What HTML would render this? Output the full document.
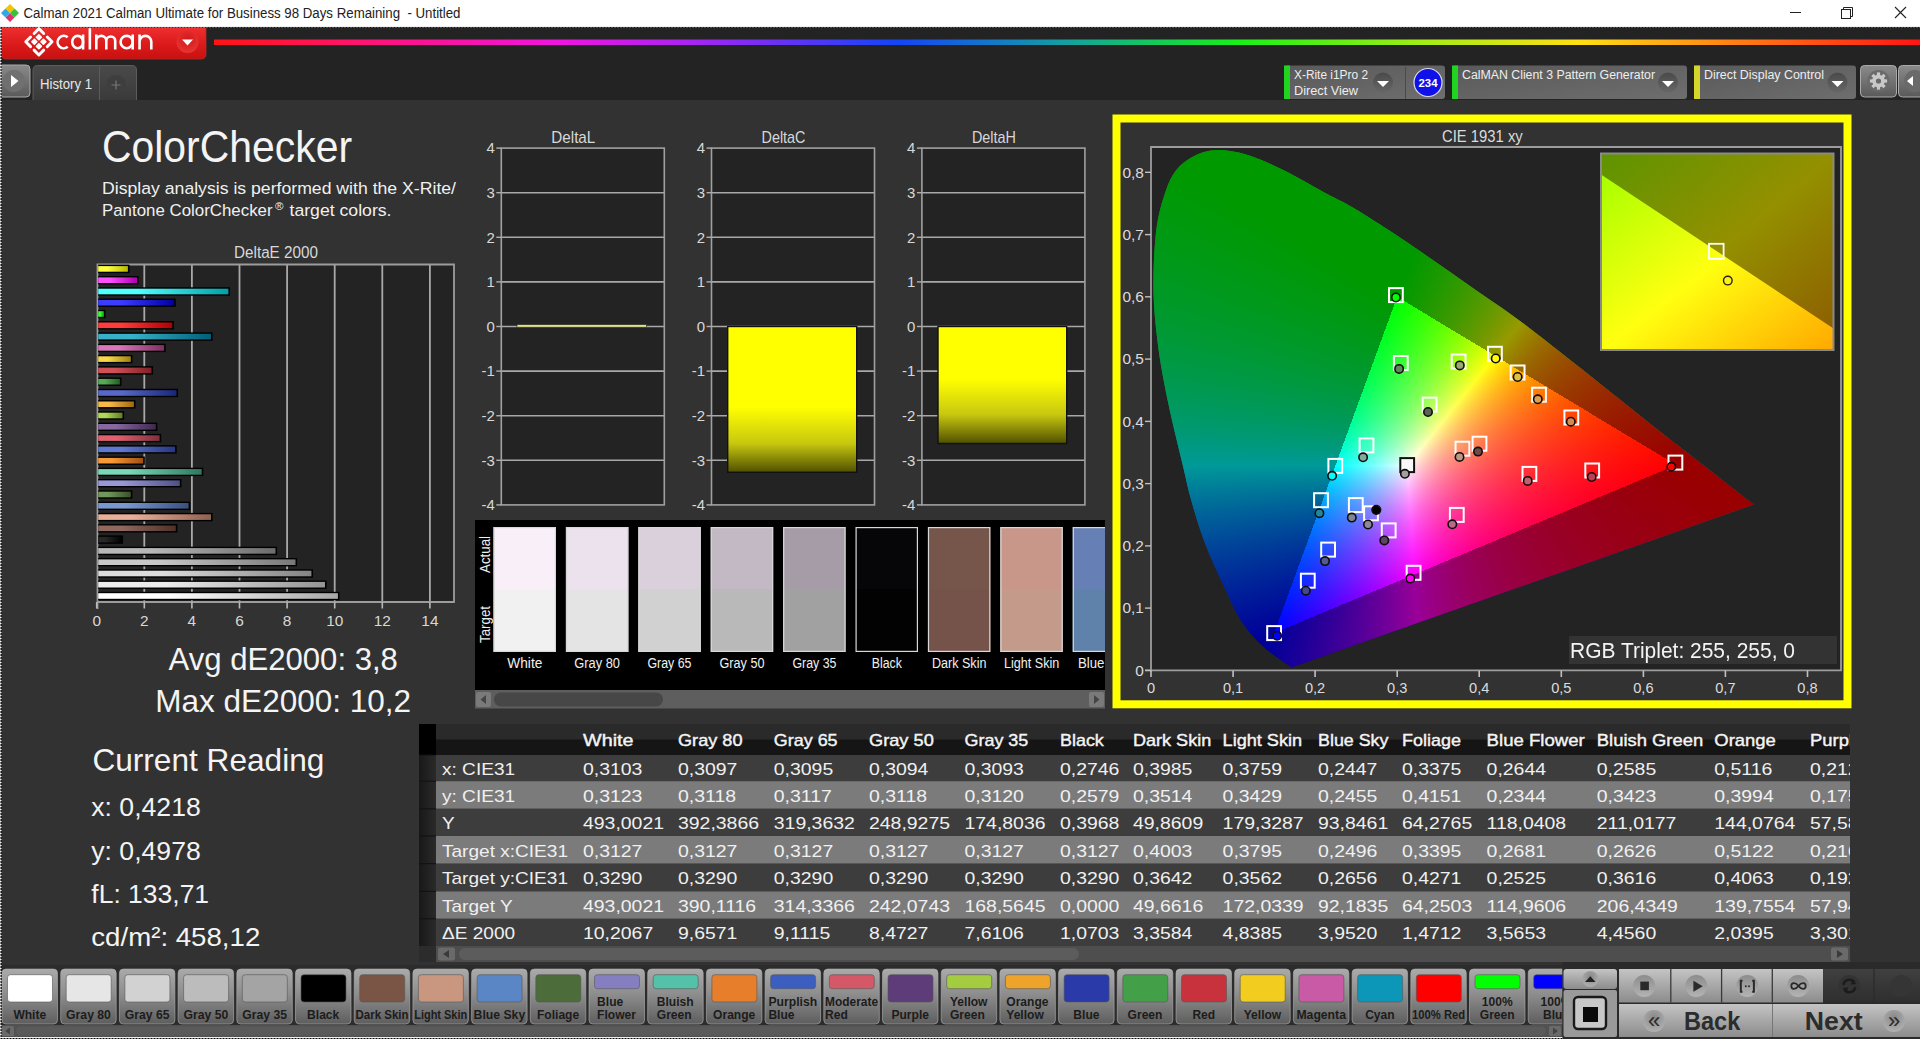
<!DOCTYPE html>
<html><head><meta charset="utf-8"><title>Calman</title>
<style>
html,body{margin:0;padding:0;width:1920px;height:1039px;overflow:hidden;background:#323232;}
svg{position:absolute;left:0;top:0;font-family:"Liberation Sans",sans-serif;}
canvas{position:absolute;left:1151px;top:147px;}
</style></head><body>
<svg width="1920" height="1039" viewBox="0 0 1920 1039">
<defs><pattern id="dots" width="3" height="3" patternUnits="userSpaceOnUse"><rect width="3" height="3" fill="#f0f0f0"/><rect x="0.5" y="0" width="2" height="2" fill="#080808"/></pattern><linearGradient id="rainbow" x1="214" x2="1920" y1="0" y2="0" gradientUnits="userSpaceOnUse"><stop offset="0" stop-color="#ff1414"/><stop offset="0.084" stop-color="#ff1470"/><stop offset="0.2" stop-color="#f014e0"/><stop offset="0.28" stop-color="#a824f0"/><stop offset="0.4" stop-color="#1444f8"/><stop offset="0.5" stop-color="#14a0a0"/><stop offset="0.6" stop-color="#18f018"/><stop offset="0.706" stop-color="#a0ec14"/><stop offset="0.8" stop-color="#ffe014"/><stop offset="0.89" stop-color="#ff8014"/><stop offset="1" stop-color="#ff1414"/></linearGradient><linearGradient id="redbtn" x1="0" x2="0" y1="0" y2="1"><stop offset="0" stop-color="#ee3030"/><stop offset="0.5" stop-color="#dd1c1c"/><stop offset="1" stop-color="#c81010"/></linearGradient><radialGradient id="reddd" cx="0.5" cy="0.4" r="0.6"><stop offset="0" stop-color="#d01818"/><stop offset="1" stop-color="#e83434"/></radialGradient><linearGradient id="gbtn" x1="0" x2="0" y1="0" y2="1"><stop offset="0" stop-color="#8a8a8a"/><stop offset="1" stop-color="#5a5a5a"/></linearGradient><linearGradient id="tabg" x1="0" x2="0" y1="0" y2="1"><stop offset="0" stop-color="#4a4a4a"/><stop offset="1" stop-color="#3a3a3a"/></linearGradient><linearGradient id="boxg" x1="0" x2="1" y1="0" y2="1"><stop offset="0" stop-color="#595959"/><stop offset="1" stop-color="#6e6e6e"/></linearGradient><linearGradient id="ddg" x1="0" x2="0" y1="0" y2="1"><stop offset="0" stop-color="#4a4a4a"/><stop offset="1" stop-color="#666"/></linearGradient><linearGradient id="bg0" x1="0" x2="1" y1="0" y2="0"><stop offset="0" stop-color="#ffff40"/><stop offset="0.3" stop-color="#ffff40"/><stop offset="1" stop-color="#b8b800"/></linearGradient><linearGradient id="bg1" x1="0" x2="1" y1="0" y2="0"><stop offset="0" stop-color="#ff50ff"/><stop offset="0.3" stop-color="#ff50ff"/><stop offset="1" stop-color="#b000b0"/></linearGradient><linearGradient id="bg2" x1="0" x2="1" y1="0" y2="0"><stop offset="0" stop-color="#50ffff"/><stop offset="0.3" stop-color="#50ffff"/><stop offset="1" stop-color="#00a0a8"/></linearGradient><linearGradient id="bg3" x1="0" x2="1" y1="0" y2="0"><stop offset="0" stop-color="#3c3cff"/><stop offset="0.3" stop-color="#3c3cff"/><stop offset="1" stop-color="#0000a0"/></linearGradient><linearGradient id="bg4" x1="0" x2="1" y1="0" y2="0"><stop offset="0" stop-color="#40ff40"/><stop offset="0.3" stop-color="#40ff40"/><stop offset="1" stop-color="#00b000"/></linearGradient><linearGradient id="bg5" x1="0" x2="1" y1="0" y2="0"><stop offset="0" stop-color="#ff3c3c"/><stop offset="0.3" stop-color="#ff3c3c"/><stop offset="1" stop-color="#b00000"/></linearGradient><linearGradient id="bg6" x1="0" x2="1" y1="0" y2="0"><stop offset="0" stop-color="#38b0c8"/><stop offset="0.3" stop-color="#38b0c8"/><stop offset="1" stop-color="#006078"/></linearGradient><linearGradient id="bg7" x1="0" x2="1" y1="0" y2="0"><stop offset="0" stop-color="#d878b8"/><stop offset="0.3" stop-color="#d878b8"/><stop offset="1" stop-color="#803060"/></linearGradient><linearGradient id="bg8" x1="0" x2="1" y1="0" y2="0"><stop offset="0" stop-color="#f8d848"/><stop offset="0.3" stop-color="#f8d848"/><stop offset="1" stop-color="#a08010"/></linearGradient><linearGradient id="bg9" x1="0" x2="1" y1="0" y2="0"><stop offset="0" stop-color="#d05058"/><stop offset="0.3" stop-color="#d05058"/><stop offset="1" stop-color="#802028"/></linearGradient><linearGradient id="bg10" x1="0" x2="1" y1="0" y2="0"><stop offset="0" stop-color="#58a858"/><stop offset="0.3" stop-color="#58a858"/><stop offset="1" stop-color="#206020"/></linearGradient><linearGradient id="bg11" x1="0" x2="1" y1="0" y2="0"><stop offset="0" stop-color="#5868c8"/><stop offset="0.3" stop-color="#5868c8"/><stop offset="1" stop-color="#182878"/></linearGradient><linearGradient id="bg12" x1="0" x2="1" y1="0" y2="0"><stop offset="0" stop-color="#f8b848"/><stop offset="0.3" stop-color="#f8b848"/><stop offset="1" stop-color="#a06810"/></linearGradient><linearGradient id="bg13" x1="0" x2="1" y1="0" y2="0"><stop offset="0" stop-color="#b0d858"/><stop offset="0.3" stop-color="#b0d858"/><stop offset="1" stop-color="#608020"/></linearGradient><linearGradient id="bg14" x1="0" x2="1" y1="0" y2="0"><stop offset="0" stop-color="#8868a0"/><stop offset="0.3" stop-color="#8868a0"/><stop offset="1" stop-color="#402850"/></linearGradient><linearGradient id="bg15" x1="0" x2="1" y1="0" y2="0"><stop offset="0" stop-color="#e06070"/><stop offset="0.3" stop-color="#e06070"/><stop offset="1" stop-color="#803040"/></linearGradient><linearGradient id="bg16" x1="0" x2="1" y1="0" y2="0"><stop offset="0" stop-color="#6078d0"/><stop offset="0.3" stop-color="#6078d0"/><stop offset="1" stop-color="#283880"/></linearGradient><linearGradient id="bg17" x1="0" x2="1" y1="0" y2="0"><stop offset="0" stop-color="#f89838"/><stop offset="0.3" stop-color="#f89838"/><stop offset="1" stop-color="#a05010"/></linearGradient><linearGradient id="bg18" x1="0" x2="1" y1="0" y2="0"><stop offset="0" stop-color="#78d8b8"/><stop offset="0.3" stop-color="#78d8b8"/><stop offset="1" stop-color="#307860"/></linearGradient><linearGradient id="bg19" x1="0" x2="1" y1="0" y2="0"><stop offset="0" stop-color="#9898d8"/><stop offset="0.3" stop-color="#9898d8"/><stop offset="1" stop-color="#505088"/></linearGradient><linearGradient id="bg20" x1="0" x2="1" y1="0" y2="0"><stop offset="0" stop-color="#70985a"/><stop offset="0.3" stop-color="#70985a"/><stop offset="1" stop-color="#3a5028"/></linearGradient><linearGradient id="bg21" x1="0" x2="1" y1="0" y2="0"><stop offset="0" stop-color="#7898d0"/><stop offset="0.3" stop-color="#7898d0"/><stop offset="1" stop-color="#385080"/></linearGradient><linearGradient id="bg22" x1="0" x2="1" y1="0" y2="0"><stop offset="0" stop-color="#e8b098"/><stop offset="0.3" stop-color="#e8b098"/><stop offset="1" stop-color="#906050"/></linearGradient><linearGradient id="bg23" x1="0" x2="1" y1="0" y2="0"><stop offset="0" stop-color="#906860"/><stop offset="0.3" stop-color="#906860"/><stop offset="1" stop-color="#503028"/></linearGradient><linearGradient id="bg24" x1="0" x2="1" y1="0" y2="0"><stop offset="0" stop-color="#282828"/><stop offset="0.3" stop-color="#282828"/><stop offset="1" stop-color="#000000"/></linearGradient><linearGradient id="bg25" x1="0" x2="1" y1="0" y2="0"><stop offset="0" stop-color="#b8b8b8"/><stop offset="0.3" stop-color="#b8b8b8"/><stop offset="1" stop-color="#6c6c6c"/></linearGradient><linearGradient id="bg26" x1="0" x2="1" y1="0" y2="0"><stop offset="0" stop-color="#c8c8c8"/><stop offset="0.3" stop-color="#c8c8c8"/><stop offset="1" stop-color="#787878"/></linearGradient><linearGradient id="bg27" x1="0" x2="1" y1="0" y2="0"><stop offset="0" stop-color="#dcdcdc"/><stop offset="0.3" stop-color="#dcdcdc"/><stop offset="1" stop-color="#848484"/></linearGradient><linearGradient id="bg28" x1="0" x2="1" y1="0" y2="0"><stop offset="0" stop-color="#ececec"/><stop offset="0.3" stop-color="#ececec"/><stop offset="1" stop-color="#949494"/></linearGradient><linearGradient id="bg29" x1="0" x2="1" y1="0" y2="0"><stop offset="0" stop-color="#ffffff"/><stop offset="0.3" stop-color="#ffffff"/><stop offset="1" stop-color="#a8a8a8"/></linearGradient><linearGradient id="ybar" x1="0" x2="0" y1="0" y2="1"><stop offset="0" stop-color="#ffff00"/><stop offset="0.55" stop-color="#ffff00"/><stop offset="0.8" stop-color="#c8c810"/><stop offset="1" stop-color="#505000"/></linearGradient><linearGradient id="ybar2" x1="0" x2="0" y1="0" y2="1"><stop offset="0" stop-color="#ffff00"/><stop offset="0.45" stop-color="#ffff00"/><stop offset="0.75" stop-color="#c8c810"/><stop offset="1" stop-color="#505000"/></linearGradient><clipPath id="pclip"><rect x="475" y="520" width="630" height="170"/></clipPath><clipPath id="tclip"><rect x="419" y="724" width="1431" height="240"/></clipPath><linearGradient id="rh0" x1="0" x2="1"><stop offset="0" stop-color="#181818"/><stop offset="1" stop-color="#2a2a2a"/></linearGradient><linearGradient id="swb" x1="0" x2="0" y1="0" y2="1"><stop offset="0" stop-color="#aaaaaa"/><stop offset="0.45" stop-color="#8e8e8e"/><stop offset="1" stop-color="#5e5e5e"/></linearGradient><clipPath id="swclip"><rect x="0" y="962" width="1562.5" height="77"/></clipPath><linearGradient id="lb" x1="0" x2="0" y1="0" y2="1"><stop offset="0" stop-color="#c4c4c4"/><stop offset="1" stop-color="#8c8c8c"/></linearGradient><linearGradient id="db" x1="0" x2="0" y1="0" y2="1"><stop offset="0" stop-color="#404040"/><stop offset="1" stop-color="#2e2e2e"/></linearGradient><radialGradient id="cbt" cx="0.5" cy="0.35" r="0.65"><stop offset="0" stop-color="#888"/><stop offset="1" stop-color="#b0b0b0"/></radialGradient><linearGradient id="cbt2" x1="0" x2="0" y1="0" y2="1"><stop offset="0" stop-color="#8c8c8c"/><stop offset="1" stop-color="#b4b4b4"/></linearGradient><linearGradient id="inUp" x1="0" y1="0" x2="1" y2="1"><stop offset="0" stop-color="#5e9400"/><stop offset="0.5" stop-color="#949000"/><stop offset="1" stop-color="#8c5a00"/></linearGradient><linearGradient id="inLo" x1="0" y1="0" x2="1" y2="1"><stop offset="0" stop-color="#a8ff00"/><stop offset="0.5" stop-color="#ffff10"/><stop offset="1" stop-color="#ffa800"/></linearGradient></defs>
<rect x="0" y="0" width="1920" height="26" fill="#ffffff" />
<g transform="translate(10,13)"><path d="M0,-9 L4.5,-4.5 L0,0 L-4.5,-4.5Z" fill="#f5c400"/><path d="M4.5,-4.5 L9,0 L4.5,4.5 L0,0Z" fill="#3cbf3c"/><path d="M0,0 L4.5,4.5 L0,9 L-4.5,4.5Z" fill="#e0336e"/><path d="M-4.5,-4.5 L0,0 L-4.5,4.5 L-9,0Z" fill="#2ea8e6"/></g>
<text x="23.5" y="18.2" font-size="14.83" fill="#222222" textLength="437.0" lengthAdjust="spacingAndGlyphs" >Calman 2021 Calman Ultimate for Business 98 Days Remaining  - Untitled</text>
<line x1="1790" y1="12.5" x2="1801" y2="12.5" stroke="#222" stroke-width="1"/>
<rect x="1841.5" y="9.5" width="9" height="9" fill="none" stroke="#222" stroke-width="1"/><path d="M1843.5,9.5 V7.5 H1852.5 V16.5 H1850.5" fill="none" stroke="#222" stroke-width="1"/>
<path d="M1895,7 L1906,18 M1906,7 L1895,18" stroke="#222" stroke-width="1.1"/>
<rect x="0" y="26" width="1920" height="74" fill="#232323" />
<rect x="214" y="39.5" width="1706" height="5.5" fill="url(#rainbow)" />
<path d="M1,27 H206 V54 Q206,59 201,59 H6 Q1,59 1,54 Z" fill="url(#redbtn)" stroke="#a83030" stroke-width="0.8"/>
<rect x="0" y="26" width="1920" height="1.5" fill="url(#dots)" />
<g transform="translate(38.9,41.8) rotate(45)"><path d="M-9.3,-2.500000000000001 V-9.3 H-2.500000000000001 M2.500000000000001,-9.3 H9.3 V-2.500000000000001 M9.3,2.500000000000001 V9.3 H2.500000000000001 M-2.500000000000001,9.3 H-9.3 V2.500000000000001" fill="none" stroke="#fff" stroke-width="2.9" stroke-linejoin="round" stroke-linecap="round"/><rect x="-5.75" y="-5.75" width="5.1" height="5.1" rx="0.8" fill="#fff"/><rect x="-5.75" y="0.65" width="5.1" height="5.1" rx="0.8" fill="#fff"/><rect x="0.65" y="-5.75" width="5.1" height="5.1" rx="0.8" fill="#fff"/><rect x="0.65" y="0.65" width="5.1" height="5.1" rx="0.8" fill="#fff"/></g>
<path d="M67.7,37.34 A6.15,6.15 0 1 0 67.7,46.76 M83.1,34.6 V49.5 M89.85,28.3 V49.5 M96.3,49.5 V34.6 M96.3,40.9 A5,5 0 0 1 106.3,40.9 V49.5 M106.3,40.9 A4.45,4.45 0 0 1 115.2,40.9 V49.5 M132.7,34.6 V49.5 M139.55,49.5 V34.6 M139.55,41.7 A5.875,5.875 0 0 1 151.3,41.7 V49.5" fill="none" stroke="#fff" stroke-width="2.6"/>
<ellipse cx="77.65" cy="42.05" rx="5.45" ry="6.15" fill="none" stroke="#fff" stroke-width="2.6"/>
<ellipse cx="126.65" cy="42.05" rx="6.05" ry="6.15" fill="none" stroke="#fff" stroke-width="2.6"/>
<circle cx="187.5" cy="42" r="11" fill="url(#reddd)"/>
<path d="M182,39.5 L193,39.5 L187.5,45.5Z" fill="#fff"/>
<rect x="-3" y="65" width="33" height="32" rx="4" fill="url(#gbtn)" stroke="#aaa" stroke-width="1"/>
<circle cx="14" cy="81" r="11" fill="#707070"/>
<path d="M11,75 L18.5,81 L11,87Z" fill="#fff"/>
<path d="M33,100 V70 Q33,65.5 37.5,65.5 H132 Q136.5,65.5 136.5,70 V100Z" fill="url(#tabg)"/>
<path d="M33,100 V70 Q33,65.5 37.5,65.5 H132 Q136.5,65.5 136.5,70 V100" fill="none" stroke="#5c5c5c" stroke-width="1"/>
<line x1="99.5" y1="66" x2="99.5" y2="100" stroke="#5c5c5c" stroke-width="1"/>
<text x="40.0" y="88.5" font-size="15.26" fill="#e8e8e8" textLength="52.0" lengthAdjust="spacingAndGlyphs" >History 1</text>
<circle cx="116" cy="85" r="10" fill="#3e3e3e"/>
<path d="M116,80.5 V89.5 M111.5,85 H120.5" stroke="#777" stroke-width="1.2"/>
<rect x="1284" y="65.5" width="161" height="33.5" rx="3" fill="url(#boxg)"/>
<rect x="1284" y="65.5" width="6" height="33.5" fill="#22d422" />
<text x="1294.0" y="78.5" font-size="12.50" fill="#eeeeee" textLength="74.0" lengthAdjust="spacingAndGlyphs" >X-Rite i1Pro 2</text>
<text x="1294.0" y="95.0" font-size="12.50" fill="#eeeeee" textLength="64.0" lengthAdjust="spacingAndGlyphs" >Direct View</text>
<circle cx="1383" cy="82.5" r="10" fill="url(#ddg)"/>
<path d="M1377,81 L1389,81 L1383,87Z" fill="#fff"/>
<line x1="1405.5" y1="67" x2="1405.5" y2="99" stroke="#4a4a4a" stroke-width="1"/>
<circle cx="1428" cy="82.5" r="14" fill="#1010e8" stroke="#dde" stroke-width="1.2"/>
<text x="1428.0" y="86.8" font-size="11.05" fill="#fff" text-anchor="middle" font-weight="bold" textLength="19.0" lengthAdjust="spacingAndGlyphs" >234</text>
<rect x="1452" y="65.5" width="235" height="33.5" rx="3" fill="url(#boxg)"/>
<rect x="1452" y="65.5" width="6" height="33.5" fill="#22d422" />
<text x="1462.0" y="78.5" font-size="12.50" fill="#eeeeee" textLength="193.0" lengthAdjust="spacingAndGlyphs" >CalMAN Client 3 Pattern Generator</text>
<circle cx="1668" cy="82.5" r="10" fill="url(#ddg)"/>
<path d="M1662,81 L1674,81 L1668,87Z" fill="#fff"/>
<rect x="1694" y="65.5" width="162" height="33.5" rx="3" fill="url(#boxg)"/>
<rect x="1694" y="65.5" width="6" height="33.5" fill="#d6d62a" />
<text x="1704.0" y="78.5" font-size="12.50" fill="#eeeeee" textLength="120.0" lengthAdjust="spacingAndGlyphs" >Direct Display Control</text>
<circle cx="1837.5" cy="82.5" r="10" fill="url(#ddg)"/>
<path d="M1831.5,81 L1843.5,81 L1837.5,87Z" fill="#fff"/>
<rect x="1860.5" y="65.5" width="36" height="31.5" rx="4" fill="url(#gbtn)" stroke="#aaa" stroke-width="1"/>
<circle cx="1878.5" cy="81" r="11" fill="#6a6a6a"/>
<g transform="translate(1878.5,81)" fill="#c8c8c8"><circle r="6.3"/><rect x="-1.6" y="-8.6" width="3.2" height="4" transform="rotate(0)"/><rect x="-1.6" y="-8.6" width="3.2" height="4" transform="rotate(45)"/><rect x="-1.6" y="-8.6" width="3.2" height="4" transform="rotate(90)"/><rect x="-1.6" y="-8.6" width="3.2" height="4" transform="rotate(135)"/><rect x="-1.6" y="-8.6" width="3.2" height="4" transform="rotate(180)"/><rect x="-1.6" y="-8.6" width="3.2" height="4" transform="rotate(225)"/><rect x="-1.6" y="-8.6" width="3.2" height="4" transform="rotate(270)"/><rect x="-1.6" y="-8.6" width="3.2" height="4" transform="rotate(315)"/><circle r="2.6" fill="#6a6a6a"/></g>
<rect x="1898.5" y="65.5" width="30" height="31.5" rx="4" fill="url(#gbtn)" stroke="#aaa" stroke-width="1"/>
<circle cx="1915" cy="81" r="11" fill="#6a6a6a"/>
<path d="M1907,81 L1913,76 L1913,86Z" fill="#fff"/>
<rect x="0" y="100" width="1920" height="868" fill="#323232" />
<text x="102.0" y="162.0" font-size="45.06" fill="#f4f4f4" textLength="250.0" lengthAdjust="spacingAndGlyphs" >ColorChecker</text>
<text x="102.0" y="193.5" font-size="16.86" fill="#f0f0f0" textLength="354.0" lengthAdjust="spacingAndGlyphs" >Display analysis is performed with the X-Rite/</text>
<text x="102.0" y="216.0" font-size="16.86" fill="#f0f0f0" >Pantone ColorChecker</text>
<text x="275" y="210" font-size="11.5" fill="#f0f0f0">®</text>
<text x="289.5" y="216.0" font-size="16.86" fill="#f0f0f0" textLength="102.0" lengthAdjust="spacingAndGlyphs" >target colors.</text>
<text x="276.0" y="258.2" font-size="16.42" fill="#d8d8d8" text-anchor="middle" textLength="84.0" lengthAdjust="spacingAndGlyphs" >DeltaE 2000</text>
<rect x="97.5" y="264.5" width="356.5" height="337.5" fill="#232323" />
<line x1="144.3" y1="265" x2="144.3" y2="602" stroke="#a8a8a8" stroke-width="1.8"/>
<line x1="191.9" y1="265" x2="191.9" y2="602" stroke="#a8a8a8" stroke-width="1.8"/>
<line x1="239.5" y1="265" x2="239.5" y2="602" stroke="#a8a8a8" stroke-width="1.8"/>
<line x1="287.1" y1="265" x2="287.1" y2="602" stroke="#a8a8a8" stroke-width="1.8"/>
<line x1="334.7" y1="265" x2="334.7" y2="602" stroke="#a8a8a8" stroke-width="1.8"/>
<line x1="382.3" y1="265" x2="382.3" y2="602" stroke="#a8a8a8" stroke-width="1.8"/>
<line x1="429.9" y1="265" x2="429.9" y2="602" stroke="#a8a8a8" stroke-width="1.8"/>
<path d="M97.5,609 V264.5 H454 V602 H97.5" fill="none" stroke="#9c9c9c" stroke-width="1.8"/>
<line x1="96.7" y1="602" x2="96.7" y2="608.5" stroke="#b8b8b8" stroke-width="1.6"/>
<text x="96.7" y="625.5" font-size="15.41" fill="#d8d8d8" text-anchor="middle" >0</text>
<line x1="144.3" y1="602" x2="144.3" y2="608.5" stroke="#b8b8b8" stroke-width="1.6"/>
<text x="144.3" y="625.5" font-size="15.41" fill="#d8d8d8" text-anchor="middle" >2</text>
<line x1="191.9" y1="602" x2="191.9" y2="608.5" stroke="#b8b8b8" stroke-width="1.6"/>
<text x="191.9" y="625.5" font-size="15.41" fill="#d8d8d8" text-anchor="middle" >4</text>
<line x1="239.5" y1="602" x2="239.5" y2="608.5" stroke="#b8b8b8" stroke-width="1.6"/>
<text x="239.5" y="625.5" font-size="15.41" fill="#d8d8d8" text-anchor="middle" >6</text>
<line x1="287.1" y1="602" x2="287.1" y2="608.5" stroke="#b8b8b8" stroke-width="1.6"/>
<text x="287.1" y="625.5" font-size="15.41" fill="#d8d8d8" text-anchor="middle" >8</text>
<line x1="334.7" y1="602" x2="334.7" y2="608.5" stroke="#b8b8b8" stroke-width="1.6"/>
<text x="334.7" y="625.5" font-size="15.41" fill="#d8d8d8" text-anchor="middle" >10</text>
<line x1="382.3" y1="602" x2="382.3" y2="608.5" stroke="#b8b8b8" stroke-width="1.6"/>
<text x="382.3" y="625.5" font-size="15.41" fill="#d8d8d8" text-anchor="middle" >12</text>
<line x1="429.9" y1="602" x2="429.9" y2="608.5" stroke="#b8b8b8" stroke-width="1.6"/>
<text x="429.9" y="625.5" font-size="15.41" fill="#d8d8d8" text-anchor="middle" >14</text>
<rect x="98.2" y="264.7" width="31.3" height="8.4" fill="#000"/>
<rect x="98.2" y="266.1" width="29.7" height="5.6" fill="url(#bg0)"/>
<rect x="98.2" y="276.0" width="40.4" height="8.4" fill="#000"/>
<rect x="98.2" y="277.4" width="38.8" height="5.6" fill="url(#bg1)"/>
<rect x="98.2" y="287.3" width="131.8" height="8.4" fill="#000"/>
<rect x="98.2" y="288.7" width="130.2" height="5.6" fill="url(#bg2)"/>
<rect x="98.2" y="298.5" width="77.5" height="8.4" fill="#000"/>
<rect x="98.2" y="299.9" width="75.9" height="5.6" fill="url(#bg3)"/>
<rect x="98.2" y="309.8" width="7.3" height="8.4" fill="#000"/>
<rect x="98.2" y="311.2" width="5.7" height="5.6" fill="url(#bg4)"/>
<rect x="98.2" y="321.1" width="75.6" height="8.4" fill="#000"/>
<rect x="98.2" y="322.5" width="74.0" height="5.6" fill="url(#bg5)"/>
<rect x="98.2" y="332.4" width="114.4" height="8.4" fill="#000"/>
<rect x="98.2" y="333.8" width="112.8" height="5.6" fill="url(#bg6)"/>
<rect x="98.2" y="343.7" width="67.5" height="8.4" fill="#000"/>
<rect x="98.2" y="345.1" width="65.9" height="5.6" fill="url(#bg7)"/>
<rect x="98.2" y="354.9" width="34.2" height="8.4" fill="#000"/>
<rect x="98.2" y="356.3" width="32.6" height="5.6" fill="url(#bg8)"/>
<rect x="98.2" y="366.2" width="54.9" height="8.4" fill="#000"/>
<rect x="98.2" y="367.6" width="53.3" height="5.6" fill="url(#bg9)"/>
<rect x="98.2" y="377.5" width="23.3" height="8.4" fill="#000"/>
<rect x="98.2" y="378.9" width="21.7" height="5.6" fill="url(#bg10)"/>
<rect x="98.2" y="388.8" width="79.9" height="8.4" fill="#000"/>
<rect x="98.2" y="390.2" width="78.3" height="5.6" fill="url(#bg11)"/>
<rect x="98.2" y="400.1" width="37.3" height="8.4" fill="#000"/>
<rect x="98.2" y="401.5" width="35.7" height="5.6" fill="url(#bg12)"/>
<rect x="98.2" y="411.3" width="25.9" height="8.4" fill="#000"/>
<rect x="98.2" y="412.7" width="24.3" height="5.6" fill="url(#bg13)"/>
<rect x="98.2" y="422.6" width="59.2" height="8.4" fill="#000"/>
<rect x="98.2" y="424.0" width="57.6" height="5.6" fill="url(#bg14)"/>
<rect x="98.2" y="433.9" width="63.0" height="8.4" fill="#000"/>
<rect x="98.2" y="435.3" width="61.4" height="5.6" fill="url(#bg15)"/>
<rect x="98.2" y="445.2" width="78.5" height="8.4" fill="#000"/>
<rect x="98.2" y="446.6" width="76.9" height="5.6" fill="url(#bg16)"/>
<rect x="98.2" y="456.5" width="46.6" height="8.4" fill="#000"/>
<rect x="98.2" y="457.9" width="45.0" height="5.6" fill="url(#bg17)"/>
<rect x="98.2" y="467.7" width="105.1" height="8.4" fill="#000"/>
<rect x="98.2" y="469.1" width="103.5" height="5.6" fill="url(#bg18)"/>
<rect x="98.2" y="479.0" width="83.2" height="8.4" fill="#000"/>
<rect x="98.2" y="480.4" width="81.6" height="5.6" fill="url(#bg19)"/>
<rect x="98.2" y="490.3" width="34.2" height="8.4" fill="#000"/>
<rect x="98.2" y="491.7" width="32.6" height="5.6" fill="url(#bg20)"/>
<rect x="98.2" y="501.6" width="92.0" height="8.4" fill="#000"/>
<rect x="98.2" y="503.0" width="90.4" height="5.6" fill="url(#bg21)"/>
<rect x="98.2" y="512.9" width="114.4" height="8.4" fill="#000"/>
<rect x="98.2" y="514.3" width="112.8" height="5.6" fill="url(#bg22)"/>
<rect x="98.2" y="524.1" width="79.2" height="8.4" fill="#000"/>
<rect x="98.2" y="525.5" width="77.6" height="5.6" fill="url(#bg23)"/>
<rect x="98.2" y="535.4" width="24.9" height="8.4" fill="#000"/>
<rect x="98.2" y="536.8" width="23.3" height="5.6" fill="url(#bg24)"/>
<rect x="98.2" y="546.7" width="178.9" height="8.4" fill="#000"/>
<rect x="98.2" y="548.1" width="177.3" height="5.6" fill="url(#bg25)"/>
<rect x="98.2" y="558.0" width="198.9" height="8.4" fill="#000"/>
<rect x="98.2" y="559.4" width="197.3" height="5.6" fill="url(#bg26)"/>
<rect x="98.2" y="569.3" width="214.8" height="8.4" fill="#000"/>
<rect x="98.2" y="570.7" width="213.2" height="5.6" fill="url(#bg27)"/>
<rect x="98.2" y="580.5" width="228.4" height="8.4" fill="#000"/>
<rect x="98.2" y="581.9" width="226.8" height="5.6" fill="url(#bg28)"/>
<rect x="98.2" y="591.8" width="241.3" height="8.4" fill="#000"/>
<rect x="98.2" y="593.2" width="239.7" height="5.6" fill="url(#bg29)"/>
<text x="168.5" y="669.8" font-size="31.98" fill="#f4f4f4" textLength="229.4" lengthAdjust="spacingAndGlyphs" >Avg dE2000: 3,8</text>
<text x="155.3" y="712.3" font-size="31.98" fill="#f4f4f4" textLength="255.8" lengthAdjust="spacingAndGlyphs" >Max dE2000: 10,2</text>
<text x="92.4" y="770.8" font-size="31.98" fill="#f4f4f4" textLength="232.0" lengthAdjust="spacingAndGlyphs" >Current Reading</text>
<text x="91.3" y="815.5" font-size="26.60" fill="#f4f4f4" >x: 0,4218</text>
<text x="91.3" y="859.7" font-size="26.60" fill="#f4f4f4" >y: 0,4978</text>
<text x="91.3" y="902.7" font-size="26.60" fill="#f4f4f4" textLength="117.8" lengthAdjust="spacingAndGlyphs" >fL: 133,71</text>
<text x="91.3" y="946.4" font-size="26.60" fill="#f4f4f4" textLength="169.0" lengthAdjust="spacingAndGlyphs" >cd/m²: 458,12</text>
<rect x="501.3" y="148.1" width="163" height="356.8" fill="#232323" />
<line x1="501.3" y1="460.3" x2="664.3" y2="460.3" stroke="#a8a8a8" stroke-width="1.6"/>
<line x1="501.3" y1="415.7" x2="664.3" y2="415.7" stroke="#a8a8a8" stroke-width="1.6"/>
<line x1="501.3" y1="371.1" x2="664.3" y2="371.1" stroke="#a8a8a8" stroke-width="1.6"/>
<line x1="501.3" y1="326.5" x2="664.3" y2="326.5" stroke="#a8a8a8" stroke-width="1.6"/>
<line x1="501.3" y1="281.9" x2="664.3" y2="281.9" stroke="#a8a8a8" stroke-width="1.6"/>
<line x1="501.3" y1="237.3" x2="664.3" y2="237.3" stroke="#a8a8a8" stroke-width="1.6"/>
<line x1="501.3" y1="192.7" x2="664.3" y2="192.7" stroke="#a8a8a8" stroke-width="1.6"/>
<rect x="501.3" y="148.1" width="163" height="356.8" fill="none" stroke="#a0a0a0" stroke-width="1.6"/>
<line x1="496.3" y1="504.9" x2="501.3" y2="504.9" stroke="#b0b0b0" stroke-width="1.4"/>
<text x="494.8" y="510.1" font-size="14.97" fill="#d8d8d8" text-anchor="end" >-4</text>
<line x1="496.3" y1="460.3" x2="501.3" y2="460.3" stroke="#b0b0b0" stroke-width="1.4"/>
<text x="494.8" y="465.5" font-size="14.97" fill="#d8d8d8" text-anchor="end" >-3</text>
<line x1="496.3" y1="415.7" x2="501.3" y2="415.7" stroke="#b0b0b0" stroke-width="1.4"/>
<text x="494.8" y="420.9" font-size="14.97" fill="#d8d8d8" text-anchor="end" >-2</text>
<line x1="496.3" y1="371.1" x2="501.3" y2="371.1" stroke="#b0b0b0" stroke-width="1.4"/>
<text x="494.8" y="376.3" font-size="14.97" fill="#d8d8d8" text-anchor="end" >-1</text>
<line x1="496.3" y1="326.5" x2="501.3" y2="326.5" stroke="#b0b0b0" stroke-width="1.4"/>
<text x="494.8" y="331.7" font-size="14.97" fill="#d8d8d8" text-anchor="end" >0</text>
<line x1="496.3" y1="281.9" x2="501.3" y2="281.9" stroke="#b0b0b0" stroke-width="1.4"/>
<text x="494.8" y="287.1" font-size="14.97" fill="#d8d8d8" text-anchor="end" >1</text>
<line x1="496.3" y1="237.3" x2="501.3" y2="237.3" stroke="#b0b0b0" stroke-width="1.4"/>
<text x="494.8" y="242.5" font-size="14.97" fill="#d8d8d8" text-anchor="end" >2</text>
<line x1="496.3" y1="192.7" x2="501.3" y2="192.7" stroke="#b0b0b0" stroke-width="1.4"/>
<text x="494.8" y="197.9" font-size="14.97" fill="#d8d8d8" text-anchor="end" >3</text>
<line x1="496.3" y1="148.1" x2="501.3" y2="148.1" stroke="#b0b0b0" stroke-width="1.4"/>
<text x="494.8" y="153.3" font-size="14.97" fill="#d8d8d8" text-anchor="end" >4</text>
<text x="573.3" y="142.9" font-size="15.99" fill="#d8d8d8" text-anchor="middle" textLength="44.0" lengthAdjust="spacingAndGlyphs" >DeltaL</text>
<rect x="517" y="324.6" width="129.5" height="2.6" fill="#e0e090" stroke="#222" stroke-width="0.6"/>
<rect x="711.5" y="148.1" width="163" height="356.8" fill="#232323" />
<line x1="711.5" y1="460.3" x2="874.5" y2="460.3" stroke="#a8a8a8" stroke-width="1.6"/>
<line x1="711.5" y1="415.7" x2="874.5" y2="415.7" stroke="#a8a8a8" stroke-width="1.6"/>
<line x1="711.5" y1="371.1" x2="874.5" y2="371.1" stroke="#a8a8a8" stroke-width="1.6"/>
<line x1="711.5" y1="326.5" x2="874.5" y2="326.5" stroke="#a8a8a8" stroke-width="1.6"/>
<line x1="711.5" y1="281.9" x2="874.5" y2="281.9" stroke="#a8a8a8" stroke-width="1.6"/>
<line x1="711.5" y1="237.3" x2="874.5" y2="237.3" stroke="#a8a8a8" stroke-width="1.6"/>
<line x1="711.5" y1="192.7" x2="874.5" y2="192.7" stroke="#a8a8a8" stroke-width="1.6"/>
<rect x="711.5" y="148.1" width="163" height="356.8" fill="none" stroke="#a0a0a0" stroke-width="1.6"/>
<line x1="706.5" y1="504.9" x2="711.5" y2="504.9" stroke="#b0b0b0" stroke-width="1.4"/>
<text x="705.0" y="510.1" font-size="14.97" fill="#d8d8d8" text-anchor="end" >-4</text>
<line x1="706.5" y1="460.3" x2="711.5" y2="460.3" stroke="#b0b0b0" stroke-width="1.4"/>
<text x="705.0" y="465.5" font-size="14.97" fill="#d8d8d8" text-anchor="end" >-3</text>
<line x1="706.5" y1="415.7" x2="711.5" y2="415.7" stroke="#b0b0b0" stroke-width="1.4"/>
<text x="705.0" y="420.9" font-size="14.97" fill="#d8d8d8" text-anchor="end" >-2</text>
<line x1="706.5" y1="371.1" x2="711.5" y2="371.1" stroke="#b0b0b0" stroke-width="1.4"/>
<text x="705.0" y="376.3" font-size="14.97" fill="#d8d8d8" text-anchor="end" >-1</text>
<line x1="706.5" y1="326.5" x2="711.5" y2="326.5" stroke="#b0b0b0" stroke-width="1.4"/>
<text x="705.0" y="331.7" font-size="14.97" fill="#d8d8d8" text-anchor="end" >0</text>
<line x1="706.5" y1="281.9" x2="711.5" y2="281.9" stroke="#b0b0b0" stroke-width="1.4"/>
<text x="705.0" y="287.1" font-size="14.97" fill="#d8d8d8" text-anchor="end" >1</text>
<line x1="706.5" y1="237.3" x2="711.5" y2="237.3" stroke="#b0b0b0" stroke-width="1.4"/>
<text x="705.0" y="242.5" font-size="14.97" fill="#d8d8d8" text-anchor="end" >2</text>
<line x1="706.5" y1="192.7" x2="711.5" y2="192.7" stroke="#b0b0b0" stroke-width="1.4"/>
<text x="705.0" y="197.9" font-size="14.97" fill="#d8d8d8" text-anchor="end" >3</text>
<line x1="706.5" y1="148.1" x2="711.5" y2="148.1" stroke="#b0b0b0" stroke-width="1.4"/>
<text x="705.0" y="153.3" font-size="14.97" fill="#d8d8d8" text-anchor="end" >4</text>
<text x="783.5" y="142.9" font-size="15.99" fill="#d8d8d8" text-anchor="middle" textLength="44.0" lengthAdjust="spacingAndGlyphs" >DeltaC</text>
<rect x="727.7" y="326.5" width="129" height="145.8" fill="url(#ybar)" stroke="#111" stroke-width="1.4"/>
<rect x="921.9" y="148.1" width="163" height="356.8" fill="#232323" />
<line x1="921.9" y1="460.3" x2="1084.9" y2="460.3" stroke="#a8a8a8" stroke-width="1.6"/>
<line x1="921.9" y1="415.7" x2="1084.9" y2="415.7" stroke="#a8a8a8" stroke-width="1.6"/>
<line x1="921.9" y1="371.1" x2="1084.9" y2="371.1" stroke="#a8a8a8" stroke-width="1.6"/>
<line x1="921.9" y1="326.5" x2="1084.9" y2="326.5" stroke="#a8a8a8" stroke-width="1.6"/>
<line x1="921.9" y1="281.9" x2="1084.9" y2="281.9" stroke="#a8a8a8" stroke-width="1.6"/>
<line x1="921.9" y1="237.3" x2="1084.9" y2="237.3" stroke="#a8a8a8" stroke-width="1.6"/>
<line x1="921.9" y1="192.7" x2="1084.9" y2="192.7" stroke="#a8a8a8" stroke-width="1.6"/>
<rect x="921.9" y="148.1" width="163" height="356.8" fill="none" stroke="#a0a0a0" stroke-width="1.6"/>
<line x1="916.9" y1="504.9" x2="921.9" y2="504.9" stroke="#b0b0b0" stroke-width="1.4"/>
<text x="915.4" y="510.1" font-size="14.97" fill="#d8d8d8" text-anchor="end" >-4</text>
<line x1="916.9" y1="460.3" x2="921.9" y2="460.3" stroke="#b0b0b0" stroke-width="1.4"/>
<text x="915.4" y="465.5" font-size="14.97" fill="#d8d8d8" text-anchor="end" >-3</text>
<line x1="916.9" y1="415.7" x2="921.9" y2="415.7" stroke="#b0b0b0" stroke-width="1.4"/>
<text x="915.4" y="420.9" font-size="14.97" fill="#d8d8d8" text-anchor="end" >-2</text>
<line x1="916.9" y1="371.1" x2="921.9" y2="371.1" stroke="#b0b0b0" stroke-width="1.4"/>
<text x="915.4" y="376.3" font-size="14.97" fill="#d8d8d8" text-anchor="end" >-1</text>
<line x1="916.9" y1="326.5" x2="921.9" y2="326.5" stroke="#b0b0b0" stroke-width="1.4"/>
<text x="915.4" y="331.7" font-size="14.97" fill="#d8d8d8" text-anchor="end" >0</text>
<line x1="916.9" y1="281.9" x2="921.9" y2="281.9" stroke="#b0b0b0" stroke-width="1.4"/>
<text x="915.4" y="287.1" font-size="14.97" fill="#d8d8d8" text-anchor="end" >1</text>
<line x1="916.9" y1="237.3" x2="921.9" y2="237.3" stroke="#b0b0b0" stroke-width="1.4"/>
<text x="915.4" y="242.5" font-size="14.97" fill="#d8d8d8" text-anchor="end" >2</text>
<line x1="916.9" y1="192.7" x2="921.9" y2="192.7" stroke="#b0b0b0" stroke-width="1.4"/>
<text x="915.4" y="197.9" font-size="14.97" fill="#d8d8d8" text-anchor="end" >3</text>
<line x1="916.9" y1="148.1" x2="921.9" y2="148.1" stroke="#b0b0b0" stroke-width="1.4"/>
<text x="915.4" y="153.3" font-size="14.97" fill="#d8d8d8" text-anchor="end" >4</text>
<text x="993.9" y="142.9" font-size="15.99" fill="#d8d8d8" text-anchor="middle" textLength="44.0" lengthAdjust="spacingAndGlyphs" >DeltaH</text>
<rect x="938" y="326.5" width="128.7" height="117" fill="url(#ybar2)" stroke="#111" stroke-width="1.4"/>
<rect x="475" y="520" width="630" height="170" fill="#000000" />
<g clip-path="url(#pclip)">
<rect x="493.5" y="527" width="62.5" height="62" fill="#f8eff9"/>
<rect x="493.5" y="589" width="62.5" height="63" fill="#f1f1f1"/>
<rect x="494.1" y="527.6" width="61.3" height="123.8" fill="none" stroke="#d8d8d8" stroke-width="1.2"/>
<text x="524.8" y="668.3" font-size="14.83" fill="#f0f0f0" text-anchor="middle" textLength="35.0" lengthAdjust="spacingAndGlyphs" >White</text>
<rect x="565.9" y="527" width="62.5" height="62" fill="#ebe2ed"/>
<rect x="565.9" y="589" width="62.5" height="63" fill="#e4e4e4"/>
<rect x="566.5" y="527.6" width="61.3" height="123.8" fill="none" stroke="#d8d8d8" stroke-width="1.2"/>
<text x="597.1" y="668.3" font-size="14.83" fill="#f0f0f0" text-anchor="middle" textLength="45.7" lengthAdjust="spacingAndGlyphs" >Gray 80</text>
<rect x="638.3" y="527" width="62.5" height="62" fill="#d9d0dc"/>
<rect x="638.3" y="589" width="62.5" height="63" fill="#d1d1d1"/>
<rect x="638.9" y="527.6" width="61.3" height="123.8" fill="none" stroke="#d8d8d8" stroke-width="1.2"/>
<text x="669.5" y="668.3" font-size="14.83" fill="#f0f0f0" text-anchor="middle" textLength="44.0" lengthAdjust="spacingAndGlyphs" >Gray 65</text>
<rect x="710.7" y="527" width="62.5" height="62" fill="#c2b9c4"/>
<rect x="710.7" y="589" width="62.5" height="63" fill="#b9b9b9"/>
<rect x="711.3" y="527.6" width="61.3" height="123.8" fill="none" stroke="#d8d8d8" stroke-width="1.2"/>
<text x="742.0" y="668.3" font-size="14.83" fill="#f0f0f0" text-anchor="middle" textLength="45.0" lengthAdjust="spacingAndGlyphs" >Gray 50</text>
<rect x="783.1" y="527" width="62.5" height="62" fill="#a69ca8"/>
<rect x="783.1" y="589" width="62.5" height="63" fill="#a1a1a1"/>
<rect x="783.7" y="527.6" width="61.3" height="123.8" fill="none" stroke="#d8d8d8" stroke-width="1.2"/>
<text x="814.4" y="668.3" font-size="14.83" fill="#f0f0f0" text-anchor="middle" textLength="44.0" lengthAdjust="spacingAndGlyphs" >Gray 35</text>
<rect x="855.5" y="527" width="62.5" height="62" fill="#060608"/>
<rect x="855.5" y="589" width="62.5" height="63" fill="#020202"/>
<rect x="856.1" y="527.6" width="61.3" height="123.8" fill="none" stroke="#d8d8d8" stroke-width="1.2"/>
<text x="886.8" y="668.3" font-size="14.83" fill="#f0f0f0" text-anchor="middle" textLength="30.0" lengthAdjust="spacingAndGlyphs" >Black</text>
<rect x="927.9" y="527" width="62.5" height="62" fill="#76554b"/>
<rect x="927.9" y="589" width="62.5" height="63" fill="#76534a"/>
<rect x="928.5" y="527.6" width="61.3" height="123.8" fill="none" stroke="#d8d8d8" stroke-width="1.2"/>
<text x="959.2" y="668.3" font-size="14.83" fill="#f0f0f0" text-anchor="middle" textLength="54.4" lengthAdjust="spacingAndGlyphs" >Dark Skin</text>
<rect x="1000.3" y="527" width="62.5" height="62" fill="#c8978a"/>
<rect x="1000.3" y="589" width="62.5" height="63" fill="#c49a8b"/>
<rect x="1000.9" y="527.6" width="61.3" height="123.8" fill="none" stroke="#d8d8d8" stroke-width="1.2"/>
<text x="1031.6" y="668.3" font-size="14.83" fill="#f0f0f0" text-anchor="middle" textLength="55.3" lengthAdjust="spacingAndGlyphs" >Light Skin</text>
<rect x="1072.7" y="527" width="62.5" height="62" fill="#6680b6"/>
<rect x="1072.7" y="589" width="62.5" height="63" fill="#5f82ab"/>
<rect x="1073.3" y="527.6" width="61.3" height="123.8" fill="none" stroke="#d8d8d8" stroke-width="1.2"/>
<text x="1104.0" y="668.3" font-size="14.83" fill="#f0f0f0" text-anchor="middle" textLength="52.0" lengthAdjust="spacingAndGlyphs" >Blue Sky</text>
</g>
<text transform="translate(489.5,554.5) rotate(-90)" text-anchor="middle" font-size="14.5" fill="#f0f0f0" textLength="37" lengthAdjust="spacingAndGlyphs">Actual</text>
<text transform="translate(489.5,624.5) rotate(-90)" text-anchor="middle" font-size="14.5" fill="#f0f0f0" textLength="37" lengthAdjust="spacingAndGlyphs">Target</text>
<rect x="475" y="690" width="630" height="18.5" fill="#5e5e5e" />
<rect x="476" y="692" width="15" height="15" rx="2" fill="#7a7a7a"/>
<path d="M480.5,699.5 L486,695 L486,704Z" fill="#444"/>
<rect x="494" y="692.5" width="169" height="14" rx="7" fill="#474747"/>
<rect x="1089" y="692" width="15" height="15" rx="2" fill="#7a7a7a"/>
<path d="M1099.5,699.5 L1094,695 L1094,704Z" fill="#444"/>
<g clip-path="url(#tclip)">
<rect x="419" y="724" width="1431" height="238" fill="#2c2c2c" />
<rect x="436" y="724" width="1414" height="15.5" fill="#2a2a2a" />
<rect x="436" y="739.5" width="1414" height="15.5" fill="#151515" />
<rect x="419" y="724" width="17" height="31" fill="#000000" />
<rect x="436" y="755" width="1414" height="26.200000000000045" fill="#3d3d3d" />
<rect x="419" y="755" width="17" height="26.200000000000045" fill="url(#rh0)" />
<line x1="419" y1="755" x2="436" y2="755" stroke="#111" stroke-width="1"/>
<rect x="436" y="781.2" width="1414" height="27.59999999999991" fill="#7b7b7b" />
<rect x="419" y="781.2" width="17" height="27.59999999999991" fill="url(#rh0)" />
<line x1="419" y1="781.2" x2="436" y2="781.2" stroke="#111" stroke-width="1"/>
<rect x="436" y="808.8" width="1414" height="27.200000000000045" fill="#3d3d3d" />
<rect x="419" y="808.8" width="17" height="27.200000000000045" fill="url(#rh0)" />
<line x1="419" y1="808.8" x2="436" y2="808.8" stroke="#111" stroke-width="1"/>
<rect x="436" y="836" width="1414" height="27.700000000000045" fill="#7b7b7b" />
<rect x="419" y="836" width="17" height="27.700000000000045" fill="url(#rh0)" />
<line x1="419" y1="836" x2="436" y2="836" stroke="#111" stroke-width="1"/>
<rect x="436" y="863.7" width="1414" height="27.699999999999932" fill="#3d3d3d" />
<rect x="419" y="863.7" width="17" height="27.699999999999932" fill="url(#rh0)" />
<line x1="419" y1="863.7" x2="436" y2="863.7" stroke="#111" stroke-width="1"/>
<rect x="436" y="891.4" width="1414" height="27.399999999999977" fill="#7b7b7b" />
<rect x="419" y="891.4" width="17" height="27.399999999999977" fill="url(#rh0)" />
<line x1="419" y1="891.4" x2="436" y2="891.4" stroke="#111" stroke-width="1"/>
<rect x="436" y="918.8" width="1414" height="27.200000000000045" fill="#3d3d3d" />
<rect x="419" y="918.8" width="17" height="27.200000000000045" fill="url(#rh0)" />
<line x1="419" y1="918.8" x2="436" y2="918.8" stroke="#111" stroke-width="1"/>
<text x="583.0" y="745.6" font-size="16.57" fill="#f4f4f4" textLength="50.5" lengthAdjust="spacingAndGlyphs" stroke="#f4f4f4" stroke-width="0.4">White</text>
<text x="678.0" y="745.6" font-size="16.57" fill="#f4f4f4" textLength="64.5" lengthAdjust="spacingAndGlyphs" stroke="#f4f4f4" stroke-width="0.4">Gray 80</text>
<text x="773.8" y="745.6" font-size="16.57" fill="#f4f4f4" textLength="63.8" lengthAdjust="spacingAndGlyphs" stroke="#f4f4f4" stroke-width="0.4">Gray 65</text>
<text x="869.0" y="745.6" font-size="16.57" fill="#f4f4f4" textLength="64.8" lengthAdjust="spacingAndGlyphs" stroke="#f4f4f4" stroke-width="0.4">Gray 50</text>
<text x="964.5" y="745.6" font-size="16.57" fill="#f4f4f4" textLength="63.8" lengthAdjust="spacingAndGlyphs" stroke="#f4f4f4" stroke-width="0.4">Gray 35</text>
<text x="1060.0" y="745.6" font-size="16.57" fill="#f4f4f4" textLength="43.8" lengthAdjust="spacingAndGlyphs" stroke="#f4f4f4" stroke-width="0.4">Black</text>
<text x="1133.0" y="745.6" font-size="16.57" fill="#f4f4f4" textLength="78.2" lengthAdjust="spacingAndGlyphs" stroke="#f4f4f4" stroke-width="0.4">Dark Skin</text>
<text x="1222.6" y="745.6" font-size="16.57" fill="#f4f4f4" textLength="79.5" lengthAdjust="spacingAndGlyphs" stroke="#f4f4f4" stroke-width="0.4">Light Skin</text>
<text x="1318.0" y="745.6" font-size="16.57" fill="#f4f4f4" textLength="70.5" lengthAdjust="spacingAndGlyphs" stroke="#f4f4f4" stroke-width="0.4">Blue Sky</text>
<text x="1402.0" y="745.6" font-size="16.57" fill="#f4f4f4" textLength="59.0" lengthAdjust="spacingAndGlyphs" stroke="#f4f4f4" stroke-width="0.4">Foliage</text>
<text x="1486.6" y="745.6" font-size="16.57" fill="#f4f4f4" textLength="98.2" lengthAdjust="spacingAndGlyphs" stroke="#f4f4f4" stroke-width="0.4">Blue Flower</text>
<text x="1596.8" y="745.6" font-size="16.57" fill="#f4f4f4" textLength="106.4" lengthAdjust="spacingAndGlyphs" stroke="#f4f4f4" stroke-width="0.4">Bluish Green</text>
<text x="1714.3" y="745.6" font-size="16.57" fill="#f4f4f4" textLength="61.5" lengthAdjust="spacingAndGlyphs" stroke="#f4f4f4" stroke-width="0.4">Orange</text>
<text x="1810.0" y="745.6" font-size="16.57" fill="#f4f4f4" textLength="108.5" lengthAdjust="spacingAndGlyphs" stroke="#f4f4f4" stroke-width="0.4">Purplish Blue</text>
<text x="442.0" y="774.7" font-size="17.01" fill="#f0f0f0" textLength="73.1" lengthAdjust="spacingAndGlyphs" >x: CIE31</text>
<text x="583.0" y="774.7" font-size="17.01" fill="#f0f0f0" textLength="59.4" lengthAdjust="spacingAndGlyphs" >0,3103</text>
<text x="678.0" y="774.7" font-size="17.01" fill="#f0f0f0" textLength="59.4" lengthAdjust="spacingAndGlyphs" >0,3097</text>
<text x="773.8" y="774.7" font-size="17.01" fill="#f0f0f0" textLength="59.4" lengthAdjust="spacingAndGlyphs" >0,3095</text>
<text x="869.0" y="774.7" font-size="17.01" fill="#f0f0f0" textLength="59.4" lengthAdjust="spacingAndGlyphs" >0,3094</text>
<text x="964.5" y="774.7" font-size="17.01" fill="#f0f0f0" textLength="59.4" lengthAdjust="spacingAndGlyphs" >0,3093</text>
<text x="1060.0" y="774.7" font-size="17.01" fill="#f0f0f0" textLength="59.4" lengthAdjust="spacingAndGlyphs" >0,2746</text>
<text x="1133.0" y="774.7" font-size="17.01" fill="#f0f0f0" textLength="59.4" lengthAdjust="spacingAndGlyphs" >0,3985</text>
<text x="1222.6" y="774.7" font-size="17.01" fill="#f0f0f0" textLength="59.4" lengthAdjust="spacingAndGlyphs" >0,3759</text>
<text x="1318.0" y="774.7" font-size="17.01" fill="#f0f0f0" textLength="59.4" lengthAdjust="spacingAndGlyphs" >0,2447</text>
<text x="1402.0" y="774.7" font-size="17.01" fill="#f0f0f0" textLength="59.4" lengthAdjust="spacingAndGlyphs" >0,3375</text>
<text x="1486.6" y="774.7" font-size="17.01" fill="#f0f0f0" textLength="59.4" lengthAdjust="spacingAndGlyphs" >0,2644</text>
<text x="1596.8" y="774.7" font-size="17.01" fill="#f0f0f0" textLength="59.4" lengthAdjust="spacingAndGlyphs" >0,2585</text>
<text x="1714.3" y="774.7" font-size="17.01" fill="#f0f0f0" textLength="58.0" lengthAdjust="spacingAndGlyphs" >0,5116</text>
<text x="1810.0" y="774.7" font-size="17.01" fill="#f0f0f0" textLength="59.4" lengthAdjust="spacingAndGlyphs" >0,2121</text>
<text x="442.0" y="801.6" font-size="17.01" fill="#f0f0f0" textLength="73.1" lengthAdjust="spacingAndGlyphs" >y: CIE31</text>
<text x="583.0" y="801.6" font-size="17.01" fill="#f0f0f0" textLength="59.4" lengthAdjust="spacingAndGlyphs" >0,3123</text>
<text x="678.0" y="801.6" font-size="17.01" fill="#f0f0f0" textLength="58.0" lengthAdjust="spacingAndGlyphs" >0,3118</text>
<text x="773.8" y="801.6" font-size="17.01" fill="#f0f0f0" textLength="58.0" lengthAdjust="spacingAndGlyphs" >0,3117</text>
<text x="869.0" y="801.6" font-size="17.01" fill="#f0f0f0" textLength="58.0" lengthAdjust="spacingAndGlyphs" >0,3118</text>
<text x="964.5" y="801.6" font-size="17.01" fill="#f0f0f0" textLength="59.4" lengthAdjust="spacingAndGlyphs" >0,3120</text>
<text x="1060.0" y="801.6" font-size="17.01" fill="#f0f0f0" textLength="59.4" lengthAdjust="spacingAndGlyphs" >0,2579</text>
<text x="1133.0" y="801.6" font-size="17.01" fill="#f0f0f0" textLength="59.4" lengthAdjust="spacingAndGlyphs" >0,3514</text>
<text x="1222.6" y="801.6" font-size="17.01" fill="#f0f0f0" textLength="59.4" lengthAdjust="spacingAndGlyphs" >0,3429</text>
<text x="1318.0" y="801.6" font-size="17.01" fill="#f0f0f0" textLength="59.4" lengthAdjust="spacingAndGlyphs" >0,2455</text>
<text x="1402.0" y="801.6" font-size="17.01" fill="#f0f0f0" textLength="59.4" lengthAdjust="spacingAndGlyphs" >0,4151</text>
<text x="1486.6" y="801.6" font-size="17.01" fill="#f0f0f0" textLength="59.4" lengthAdjust="spacingAndGlyphs" >0,2344</text>
<text x="1596.8" y="801.6" font-size="17.01" fill="#f0f0f0" textLength="59.4" lengthAdjust="spacingAndGlyphs" >0,3423</text>
<text x="1714.3" y="801.6" font-size="17.01" fill="#f0f0f0" textLength="59.4" lengthAdjust="spacingAndGlyphs" >0,3994</text>
<text x="1810.0" y="801.6" font-size="17.01" fill="#f0f0f0" textLength="59.4" lengthAdjust="spacingAndGlyphs" >0,1755</text>
<text x="442.0" y="828.8" font-size="17.01" fill="#f0f0f0" textLength="12.7" lengthAdjust="spacingAndGlyphs" >Y</text>
<text x="583.0" y="828.8" font-size="17.01" fill="#f0f0f0" textLength="81.0" lengthAdjust="spacingAndGlyphs" >493,0021</text>
<text x="678.0" y="828.8" font-size="17.01" fill="#f0f0f0" textLength="81.0" lengthAdjust="spacingAndGlyphs" >392,3866</text>
<text x="773.8" y="828.8" font-size="17.01" fill="#f0f0f0" textLength="81.0" lengthAdjust="spacingAndGlyphs" >319,3632</text>
<text x="869.0" y="828.8" font-size="17.01" fill="#f0f0f0" textLength="81.0" lengthAdjust="spacingAndGlyphs" >248,9275</text>
<text x="964.5" y="828.8" font-size="17.01" fill="#f0f0f0" textLength="81.0" lengthAdjust="spacingAndGlyphs" >174,8036</text>
<text x="1060.0" y="828.8" font-size="17.01" fill="#f0f0f0" textLength="59.4" lengthAdjust="spacingAndGlyphs" >0,3968</text>
<text x="1133.0" y="828.8" font-size="17.01" fill="#f0f0f0" textLength="70.2" lengthAdjust="spacingAndGlyphs" >49,8609</text>
<text x="1222.6" y="828.8" font-size="17.01" fill="#f0f0f0" textLength="81.0" lengthAdjust="spacingAndGlyphs" >179,3287</text>
<text x="1318.0" y="828.8" font-size="17.01" fill="#f0f0f0" textLength="70.2" lengthAdjust="spacingAndGlyphs" >93,8461</text>
<text x="1402.0" y="828.8" font-size="17.01" fill="#f0f0f0" textLength="70.2" lengthAdjust="spacingAndGlyphs" >64,2765</text>
<text x="1486.6" y="828.8" font-size="17.01" fill="#f0f0f0" textLength="79.6" lengthAdjust="spacingAndGlyphs" >118,0408</text>
<text x="1596.8" y="828.8" font-size="17.01" fill="#f0f0f0" textLength="79.6" lengthAdjust="spacingAndGlyphs" >211,0177</text>
<text x="1714.3" y="828.8" font-size="17.01" fill="#f0f0f0" textLength="81.0" lengthAdjust="spacingAndGlyphs" >144,0764</text>
<text x="1810.0" y="828.8" font-size="17.01" fill="#f0f0f0" textLength="70.2" lengthAdjust="spacingAndGlyphs" >57,5812</text>
<text x="442.0" y="856.5" font-size="17.01" fill="#f0f0f0" textLength="126.0" lengthAdjust="spacingAndGlyphs" >Target x:CIE31</text>
<text x="583.0" y="856.5" font-size="17.01" fill="#f0f0f0" textLength="59.4" lengthAdjust="spacingAndGlyphs" >0,3127</text>
<text x="678.0" y="856.5" font-size="17.01" fill="#f0f0f0" textLength="59.4" lengthAdjust="spacingAndGlyphs" >0,3127</text>
<text x="773.8" y="856.5" font-size="17.01" fill="#f0f0f0" textLength="59.4" lengthAdjust="spacingAndGlyphs" >0,3127</text>
<text x="869.0" y="856.5" font-size="17.01" fill="#f0f0f0" textLength="59.4" lengthAdjust="spacingAndGlyphs" >0,3127</text>
<text x="964.5" y="856.5" font-size="17.01" fill="#f0f0f0" textLength="59.4" lengthAdjust="spacingAndGlyphs" >0,3127</text>
<text x="1060.0" y="856.5" font-size="17.01" fill="#f0f0f0" textLength="59.4" lengthAdjust="spacingAndGlyphs" >0,3127</text>
<text x="1133.0" y="856.5" font-size="17.01" fill="#f0f0f0" textLength="59.4" lengthAdjust="spacingAndGlyphs" >0,4003</text>
<text x="1222.6" y="856.5" font-size="17.01" fill="#f0f0f0" textLength="59.4" lengthAdjust="spacingAndGlyphs" >0,3795</text>
<text x="1318.0" y="856.5" font-size="17.01" fill="#f0f0f0" textLength="59.4" lengthAdjust="spacingAndGlyphs" >0,2496</text>
<text x="1402.0" y="856.5" font-size="17.01" fill="#f0f0f0" textLength="59.4" lengthAdjust="spacingAndGlyphs" >0,3395</text>
<text x="1486.6" y="856.5" font-size="17.01" fill="#f0f0f0" textLength="59.4" lengthAdjust="spacingAndGlyphs" >0,2681</text>
<text x="1596.8" y="856.5" font-size="17.01" fill="#f0f0f0" textLength="59.4" lengthAdjust="spacingAndGlyphs" >0,2626</text>
<text x="1714.3" y="856.5" font-size="17.01" fill="#f0f0f0" textLength="59.4" lengthAdjust="spacingAndGlyphs" >0,5122</text>
<text x="1810.0" y="856.5" font-size="17.01" fill="#f0f0f0" textLength="59.4" lengthAdjust="spacingAndGlyphs" >0,2160</text>
<text x="442.0" y="884.2" font-size="17.01" fill="#f0f0f0" textLength="126.0" lengthAdjust="spacingAndGlyphs" >Target y:CIE31</text>
<text x="583.0" y="884.2" font-size="17.01" fill="#f0f0f0" textLength="59.4" lengthAdjust="spacingAndGlyphs" >0,3290</text>
<text x="678.0" y="884.2" font-size="17.01" fill="#f0f0f0" textLength="59.4" lengthAdjust="spacingAndGlyphs" >0,3290</text>
<text x="773.8" y="884.2" font-size="17.01" fill="#f0f0f0" textLength="59.4" lengthAdjust="spacingAndGlyphs" >0,3290</text>
<text x="869.0" y="884.2" font-size="17.01" fill="#f0f0f0" textLength="59.4" lengthAdjust="spacingAndGlyphs" >0,3290</text>
<text x="964.5" y="884.2" font-size="17.01" fill="#f0f0f0" textLength="59.4" lengthAdjust="spacingAndGlyphs" >0,3290</text>
<text x="1060.0" y="884.2" font-size="17.01" fill="#f0f0f0" textLength="59.4" lengthAdjust="spacingAndGlyphs" >0,3290</text>
<text x="1133.0" y="884.2" font-size="17.01" fill="#f0f0f0" textLength="59.4" lengthAdjust="spacingAndGlyphs" >0,3642</text>
<text x="1222.6" y="884.2" font-size="17.01" fill="#f0f0f0" textLength="59.4" lengthAdjust="spacingAndGlyphs" >0,3562</text>
<text x="1318.0" y="884.2" font-size="17.01" fill="#f0f0f0" textLength="59.4" lengthAdjust="spacingAndGlyphs" >0,2656</text>
<text x="1402.0" y="884.2" font-size="17.01" fill="#f0f0f0" textLength="59.4" lengthAdjust="spacingAndGlyphs" >0,4271</text>
<text x="1486.6" y="884.2" font-size="17.01" fill="#f0f0f0" textLength="59.4" lengthAdjust="spacingAndGlyphs" >0,2525</text>
<text x="1596.8" y="884.2" font-size="17.01" fill="#f0f0f0" textLength="59.4" lengthAdjust="spacingAndGlyphs" >0,3616</text>
<text x="1714.3" y="884.2" font-size="17.01" fill="#f0f0f0" textLength="59.4" lengthAdjust="spacingAndGlyphs" >0,4063</text>
<text x="1810.0" y="884.2" font-size="17.01" fill="#f0f0f0" textLength="59.4" lengthAdjust="spacingAndGlyphs" >0,1925</text>
<text x="442.0" y="911.8" font-size="17.01" fill="#f0f0f0" textLength="70.6" lengthAdjust="spacingAndGlyphs" >Target Y</text>
<text x="583.0" y="911.8" font-size="17.01" fill="#f0f0f0" textLength="81.0" lengthAdjust="spacingAndGlyphs" >493,0021</text>
<text x="678.0" y="911.8" font-size="17.01" fill="#f0f0f0" textLength="78.1" lengthAdjust="spacingAndGlyphs" >390,1116</text>
<text x="773.8" y="911.8" font-size="17.01" fill="#f0f0f0" textLength="81.0" lengthAdjust="spacingAndGlyphs" >314,3366</text>
<text x="869.0" y="911.8" font-size="17.01" fill="#f0f0f0" textLength="81.0" lengthAdjust="spacingAndGlyphs" >242,0743</text>
<text x="964.5" y="911.8" font-size="17.01" fill="#f0f0f0" textLength="81.0" lengthAdjust="spacingAndGlyphs" >168,5645</text>
<text x="1060.0" y="911.8" font-size="17.01" fill="#f0f0f0" textLength="59.4" lengthAdjust="spacingAndGlyphs" >0,0000</text>
<text x="1133.0" y="911.8" font-size="17.01" fill="#f0f0f0" textLength="70.2" lengthAdjust="spacingAndGlyphs" >49,6616</text>
<text x="1222.6" y="911.8" font-size="17.01" fill="#f0f0f0" textLength="81.0" lengthAdjust="spacingAndGlyphs" >172,0339</text>
<text x="1318.0" y="911.8" font-size="17.01" fill="#f0f0f0" textLength="70.2" lengthAdjust="spacingAndGlyphs" >92,1835</text>
<text x="1402.0" y="911.8" font-size="17.01" fill="#f0f0f0" textLength="70.2" lengthAdjust="spacingAndGlyphs" >64,2503</text>
<text x="1486.6" y="911.8" font-size="17.01" fill="#f0f0f0" textLength="79.6" lengthAdjust="spacingAndGlyphs" >114,9606</text>
<text x="1596.8" y="911.8" font-size="17.01" fill="#f0f0f0" textLength="81.0" lengthAdjust="spacingAndGlyphs" >206,4349</text>
<text x="1714.3" y="911.8" font-size="17.01" fill="#f0f0f0" textLength="81.0" lengthAdjust="spacingAndGlyphs" >139,7554</text>
<text x="1810.0" y="911.8" font-size="17.01" fill="#f0f0f0" textLength="70.2" lengthAdjust="spacingAndGlyphs" >57,9412</text>
<text x="442.0" y="938.8" font-size="17.01" fill="#f0f0f0" textLength="73.1" lengthAdjust="spacingAndGlyphs" >ΔE 2000</text>
<text x="583.0" y="938.8" font-size="17.01" fill="#f0f0f0" textLength="70.2" lengthAdjust="spacingAndGlyphs" >10,2067</text>
<text x="678.0" y="938.8" font-size="17.01" fill="#f0f0f0" textLength="59.4" lengthAdjust="spacingAndGlyphs" >9,6571</text>
<text x="773.8" y="938.8" font-size="17.01" fill="#f0f0f0" textLength="56.5" lengthAdjust="spacingAndGlyphs" >9,1115</text>
<text x="869.0" y="938.8" font-size="17.01" fill="#f0f0f0" textLength="59.4" lengthAdjust="spacingAndGlyphs" >8,4727</text>
<text x="964.5" y="938.8" font-size="17.01" fill="#f0f0f0" textLength="59.4" lengthAdjust="spacingAndGlyphs" >7,6106</text>
<text x="1060.0" y="938.8" font-size="17.01" fill="#f0f0f0" textLength="59.4" lengthAdjust="spacingAndGlyphs" >1,0703</text>
<text x="1133.0" y="938.8" font-size="17.01" fill="#f0f0f0" textLength="59.4" lengthAdjust="spacingAndGlyphs" >3,3584</text>
<text x="1222.6" y="938.8" font-size="17.01" fill="#f0f0f0" textLength="59.4" lengthAdjust="spacingAndGlyphs" >4,8385</text>
<text x="1318.0" y="938.8" font-size="17.01" fill="#f0f0f0" textLength="59.4" lengthAdjust="spacingAndGlyphs" >3,9520</text>
<text x="1402.0" y="938.8" font-size="17.01" fill="#f0f0f0" textLength="59.4" lengthAdjust="spacingAndGlyphs" >1,4712</text>
<text x="1486.6" y="938.8" font-size="17.01" fill="#f0f0f0" textLength="59.4" lengthAdjust="spacingAndGlyphs" >3,5653</text>
<text x="1596.8" y="938.8" font-size="17.01" fill="#f0f0f0" textLength="59.4" lengthAdjust="spacingAndGlyphs" >4,4560</text>
<text x="1714.3" y="938.8" font-size="17.01" fill="#f0f0f0" textLength="59.4" lengthAdjust="spacingAndGlyphs" >2,0395</text>
<text x="1810.0" y="938.8" font-size="17.01" fill="#f0f0f0" textLength="59.4" lengthAdjust="spacingAndGlyphs" >3,3012</text>
</g>
<rect x="436" y="946" width="1414" height="16" fill="#4e4e4e" />
<rect x="438" y="947.5" width="17" height="13" rx="2" fill="#6a6a6a"/>
<path d="M443,954 L449,950 L449,958Z" fill="#3a3a3a"/>
<rect x="459" y="948" width="620" height="12" rx="6" fill="#5c5c5c"/>
<rect x="1831" y="947.5" width="17" height="13" rx="2" fill="#6a6a6a"/>
<path d="M1843,954 L1837,950 L1837,958Z" fill="#3a3a3a"/>
<rect x="0" y="965" width="1920" height="74" fill="#2c2c2c" />
<g clip-path="url(#swclip)">
<rect x="2.0" y="969" width="55.5" height="55" rx="4" fill="url(#swb)" stroke="#b0b0b0" stroke-width="0.6"/>
<rect x="7.5" y="974.7" width="45" height="27.3" rx="3" fill="#ffffff" stroke="#555" stroke-width="0.6"/>
<text x="29.8" y="1018.8" font-size="12.06" fill="#1c1c1c" text-anchor="middle" font-weight="bold" >White</text>
<rect x="60.7" y="969" width="55.5" height="55" rx="4" fill="url(#swb)" stroke="#b0b0b0" stroke-width="0.6"/>
<rect x="66.2" y="974.7" width="45" height="27.3" rx="3" fill="#e6e6e6" stroke="#555" stroke-width="0.6"/>
<text x="88.5" y="1018.8" font-size="12.06" fill="#1c1c1c" text-anchor="middle" font-weight="bold" textLength="44.8" lengthAdjust="spacingAndGlyphs" >Gray 80</text>
<rect x="119.4" y="969" width="55.5" height="55" rx="4" fill="url(#swb)" stroke="#b0b0b0" stroke-width="0.6"/>
<rect x="124.9" y="974.7" width="45" height="27.3" rx="3" fill="#d2d2d2" stroke="#555" stroke-width="0.6"/>
<text x="147.2" y="1018.8" font-size="12.06" fill="#1c1c1c" text-anchor="middle" font-weight="bold" textLength="44.8" lengthAdjust="spacingAndGlyphs" >Gray 65</text>
<rect x="178.1" y="969" width="55.5" height="55" rx="4" fill="url(#swb)" stroke="#b0b0b0" stroke-width="0.6"/>
<rect x="183.6" y="974.7" width="45" height="27.3" rx="3" fill="#bcbcbc" stroke="#555" stroke-width="0.6"/>
<text x="205.9" y="1018.8" font-size="12.06" fill="#1c1c1c" text-anchor="middle" font-weight="bold" textLength="44.8" lengthAdjust="spacingAndGlyphs" >Gray 50</text>
<rect x="236.8" y="969" width="55.5" height="55" rx="4" fill="url(#swb)" stroke="#b0b0b0" stroke-width="0.6"/>
<rect x="242.3" y="974.7" width="45" height="27.3" rx="3" fill="#a4a4a4" stroke="#555" stroke-width="0.6"/>
<text x="264.6" y="1018.8" font-size="12.06" fill="#1c1c1c" text-anchor="middle" font-weight="bold" textLength="44.8" lengthAdjust="spacingAndGlyphs" >Gray 35</text>
<rect x="295.5" y="969" width="55.5" height="55" rx="4" fill="url(#swb)" stroke="#b0b0b0" stroke-width="0.6"/>
<rect x="301.0" y="974.7" width="45" height="27.3" rx="3" fill="#000000" stroke="#555" stroke-width="0.6"/>
<text x="323.2" y="1018.8" font-size="12.06" fill="#1c1c1c" text-anchor="middle" font-weight="bold" >Black</text>
<rect x="354.2" y="969" width="55.5" height="55" rx="4" fill="url(#swb)" stroke="#b0b0b0" stroke-width="0.6"/>
<rect x="359.7" y="974.7" width="45" height="27.3" rx="3" fill="#7a5545" stroke="#555" stroke-width="0.6"/>
<text x="382.0" y="1018.8" font-size="12.06" fill="#1c1c1c" text-anchor="middle" font-weight="bold" textLength="53.0" lengthAdjust="spacingAndGlyphs" >Dark Skin</text>
<rect x="412.9" y="969" width="55.5" height="55" rx="4" fill="url(#swb)" stroke="#b0b0b0" stroke-width="0.6"/>
<rect x="418.4" y="974.7" width="45" height="27.3" rx="3" fill="#c99680" stroke="#555" stroke-width="0.6"/>
<text x="440.7" y="1018.8" font-size="12.06" fill="#1c1c1c" text-anchor="middle" font-weight="bold" textLength="53.0" lengthAdjust="spacingAndGlyphs" >Light Skin</text>
<rect x="471.6" y="969" width="55.5" height="55" rx="4" fill="url(#swb)" stroke="#b0b0b0" stroke-width="0.6"/>
<rect x="477.1" y="974.7" width="45" height="27.3" rx="3" fill="#5a86c5" stroke="#555" stroke-width="0.6"/>
<text x="499.4" y="1018.8" font-size="12.06" fill="#1c1c1c" text-anchor="middle" font-weight="bold" textLength="51.6" lengthAdjust="spacingAndGlyphs" >Blue Sky</text>
<rect x="530.3" y="969" width="55.5" height="55" rx="4" fill="url(#swb)" stroke="#b0b0b0" stroke-width="0.6"/>
<rect x="535.8" y="974.7" width="45" height="27.3" rx="3" fill="#4c6d3a" stroke="#555" stroke-width="0.6"/>
<text x="558.1" y="1018.8" font-size="12.06" fill="#1c1c1c" text-anchor="middle" font-weight="bold" >Foliage</text>
<rect x="589.0" y="969" width="55.5" height="55" rx="4" fill="url(#swb)" stroke="#b0b0b0" stroke-width="0.6"/>
<rect x="594.5" y="974.7" width="45" height="14" rx="3" fill="#857fc2" stroke="#555" stroke-width="0.6"/>
<text x="597.1" y="1005.7" font-size="12.06" fill="#1c1c1c" font-weight="bold" >Blue</text>
<text x="597.1" y="1018.8" font-size="12.06" fill="#1c1c1c" font-weight="bold" >Flower</text>
<rect x="647.7" y="969" width="55.5" height="55" rx="4" fill="url(#swb)" stroke="#b0b0b0" stroke-width="0.6"/>
<rect x="653.2" y="974.7" width="45" height="14" rx="3" fill="#54c2a8" stroke="#555" stroke-width="0.6"/>
<text x="656.8" y="1005.7" font-size="12.06" fill="#1c1c1c" font-weight="bold" >Bluish</text>
<text x="656.8" y="1018.8" font-size="12.06" fill="#1c1c1c" font-weight="bold" >Green</text>
<rect x="706.4" y="969" width="55.5" height="55" rx="4" fill="url(#swb)" stroke="#b0b0b0" stroke-width="0.6"/>
<rect x="711.9" y="974.7" width="45" height="27.3" rx="3" fill="#e67e2c" stroke="#555" stroke-width="0.6"/>
<text x="734.2" y="1018.8" font-size="12.06" fill="#1c1c1c" text-anchor="middle" font-weight="bold" >Orange</text>
<rect x="765.1" y="969" width="55.5" height="55" rx="4" fill="url(#swb)" stroke="#b0b0b0" stroke-width="0.6"/>
<rect x="770.6" y="974.7" width="45" height="14" rx="3" fill="#3c5ec0" stroke="#555" stroke-width="0.6"/>
<text x="768.4" y="1005.7" font-size="12.06" fill="#1c1c1c" font-weight="bold" textLength="48.8" lengthAdjust="spacingAndGlyphs" >Purplish</text>
<text x="768.4" y="1018.8" font-size="12.06" fill="#1c1c1c" font-weight="bold" >Blue</text>
<rect x="823.8" y="969" width="55.5" height="55" rx="4" fill="url(#swb)" stroke="#b0b0b0" stroke-width="0.6"/>
<rect x="829.3" y="974.7" width="45" height="14" rx="3" fill="#d45868" stroke="#555" stroke-width="0.6"/>
<text x="825.1" y="1005.7" font-size="12.06" fill="#1c1c1c" font-weight="bold" textLength="53.0" lengthAdjust="spacingAndGlyphs" >Moderate</text>
<text x="825.1" y="1018.8" font-size="12.06" fill="#1c1c1c" font-weight="bold" >Red</text>
<rect x="882.5" y="969" width="55.5" height="55" rx="4" fill="url(#swb)" stroke="#b0b0b0" stroke-width="0.6"/>
<rect x="888.0" y="974.7" width="45" height="27.3" rx="3" fill="#5e3c7a" stroke="#555" stroke-width="0.6"/>
<text x="910.2" y="1018.8" font-size="12.06" fill="#1c1c1c" text-anchor="middle" font-weight="bold" >Purple</text>
<rect x="941.2" y="969" width="55.5" height="55" rx="4" fill="url(#swb)" stroke="#b0b0b0" stroke-width="0.6"/>
<rect x="946.7" y="974.7" width="45" height="14" rx="3" fill="#a4cc40" stroke="#555" stroke-width="0.6"/>
<text x="950.0" y="1005.7" font-size="12.06" fill="#1c1c1c" font-weight="bold" >Yellow</text>
<text x="950.0" y="1018.8" font-size="12.06" fill="#1c1c1c" font-weight="bold" >Green</text>
<rect x="999.9" y="969" width="55.5" height="55" rx="4" fill="url(#swb)" stroke="#b0b0b0" stroke-width="0.6"/>
<rect x="1005.4" y="974.7" width="45" height="14" rx="3" fill="#eea42a" stroke="#555" stroke-width="0.6"/>
<text x="1006.3" y="1005.7" font-size="12.06" fill="#1c1c1c" font-weight="bold" >Orange</text>
<text x="1006.3" y="1018.8" font-size="12.06" fill="#1c1c1c" font-weight="bold" >Yellow</text>
<rect x="1058.6" y="969" width="55.5" height="55" rx="4" fill="url(#swb)" stroke="#b0b0b0" stroke-width="0.6"/>
<rect x="1064.1" y="974.7" width="45" height="27.3" rx="3" fill="#2a3aa8" stroke="#555" stroke-width="0.6"/>
<text x="1086.4" y="1018.8" font-size="12.06" fill="#1c1c1c" text-anchor="middle" font-weight="bold" >Blue</text>
<rect x="1117.3" y="969" width="55.5" height="55" rx="4" fill="url(#swb)" stroke="#b0b0b0" stroke-width="0.6"/>
<rect x="1122.8" y="974.7" width="45" height="27.3" rx="3" fill="#43a048" stroke="#555" stroke-width="0.6"/>
<text x="1145.0" y="1018.8" font-size="12.06" fill="#1c1c1c" text-anchor="middle" font-weight="bold" >Green</text>
<rect x="1176.0" y="969" width="55.5" height="55" rx="4" fill="url(#swb)" stroke="#b0b0b0" stroke-width="0.6"/>
<rect x="1181.5" y="974.7" width="45" height="27.3" rx="3" fill="#c8323c" stroke="#555" stroke-width="0.6"/>
<text x="1203.8" y="1018.8" font-size="12.06" fill="#1c1c1c" text-anchor="middle" font-weight="bold" >Red</text>
<rect x="1234.7" y="969" width="55.5" height="55" rx="4" fill="url(#swb)" stroke="#b0b0b0" stroke-width="0.6"/>
<rect x="1240.2" y="974.7" width="45" height="27.3" rx="3" fill="#f2cc1e" stroke="#555" stroke-width="0.6"/>
<text x="1262.5" y="1018.8" font-size="12.06" fill="#1c1c1c" text-anchor="middle" font-weight="bold" >Yellow</text>
<rect x="1293.4" y="969" width="55.5" height="55" rx="4" fill="url(#swb)" stroke="#b0b0b0" stroke-width="0.6"/>
<rect x="1298.9" y="974.7" width="45" height="27.3" rx="3" fill="#c85aa6" stroke="#555" stroke-width="0.6"/>
<text x="1321.2" y="1018.8" font-size="12.06" fill="#1c1c1c" text-anchor="middle" font-weight="bold" textLength="49.5" lengthAdjust="spacingAndGlyphs" >Magenta</text>
<rect x="1352.1" y="969" width="55.5" height="55" rx="4" fill="url(#swb)" stroke="#b0b0b0" stroke-width="0.6"/>
<rect x="1357.6" y="974.7" width="45" height="27.3" rx="3" fill="#0c96b8" stroke="#555" stroke-width="0.6"/>
<text x="1379.9" y="1018.8" font-size="12.06" fill="#1c1c1c" text-anchor="middle" font-weight="bold" >Cyan</text>
<rect x="1410.8" y="969" width="55.5" height="55" rx="4" fill="url(#swb)" stroke="#b0b0b0" stroke-width="0.6"/>
<rect x="1416.3" y="974.7" width="45" height="27.3" rx="3" fill="#ff0000" stroke="#555" stroke-width="0.6"/>
<text x="1438.6" y="1018.8" font-size="12.06" fill="#1c1c1c" text-anchor="middle" font-weight="bold" textLength="53.0" lengthAdjust="spacingAndGlyphs" >100% Red</text>
<rect x="1469.5" y="969" width="55.5" height="55" rx="4" fill="url(#swb)" stroke="#b0b0b0" stroke-width="0.6"/>
<rect x="1475.0" y="974.7" width="45" height="14" rx="3" fill="#00ff00" stroke="#555" stroke-width="0.6"/>
<text x="1497.2" y="1005.7" font-size="12.06" fill="#1c1c1c" text-anchor="middle" font-weight="bold" >100%</text>
<text x="1497.2" y="1018.8" font-size="12.06" fill="#1c1c1c" text-anchor="middle" font-weight="bold" >Green</text>
<rect x="1528.2" y="969" width="55.5" height="55" rx="4" fill="url(#swb)" stroke="#b0b0b0" stroke-width="0.6"/>
<rect x="1533.7" y="974.7" width="45" height="14" rx="3" fill="#0000ff" stroke="#555" stroke-width="0.6"/>
<text x="1556.0" y="1005.7" font-size="12.06" fill="#1c1c1c" text-anchor="middle" font-weight="bold" >100%</text>
<text x="1556.0" y="1018.8" font-size="12.06" fill="#1c1c1c" text-anchor="middle" font-weight="bold" >Blue</text>
</g>
<rect x="0" y="1025" width="1562.5" height="12" fill="#525252" />
<rect x="2" y="1026" width="12" height="10" rx="1.5" fill="#6a6a6a"/><path d="M5,1031 L10,1027.5 L10,1034.5Z" fill="#444"/>
<rect x="16" y="1026.5" width="1530" height="9" rx="4.5" fill="#5a5a5a"/>
<rect x="1549" y="1026" width="12" height="10" rx="1.5" fill="#6a6a6a"/><path d="M1558,1031 L1553,1027.5 L1553,1034.5Z" fill="#444"/>
<rect x="0" y="1037" width="1920" height="2" fill="url(#dots)" />
<rect x="1562.5" y="962" width="357.5" height="77" fill="#2a2a2a" />
<rect x="1563.5" y="969" width="53.5" height="20" rx="3" fill="url(#lb)"/>
<circle cx="1590.3" cy="979" r="8" fill="url(#cbt)"/><path d="M1585,982 L1590.3,976.3 L1595.6,982Z" fill="#222"/>
<rect x="1563.5" y="990" width="53.5" height="47" rx="2" fill="#9a9a9a"/>
<rect x="1574" y="997" width="32" height="32" rx="4" fill="#c8c8c8" stroke="#1a1a1a" stroke-width="2.4"/>
<rect x="1583" y="1007" width="15" height="15" fill="#0a0a0a" />
<rect x="1619" y="969" width="204" height="33.5" fill="url(#lb)"/>
<line x1="1670.8" y1="969" x2="1670.8" y2="1002.5" stroke="#3a3a3a" stroke-width="1.3"/>
<line x1="1721.6" y1="969" x2="1721.6" y2="1002.5" stroke="#3a3a3a" stroke-width="1.3"/>
<line x1="1772.3" y1="969" x2="1772.3" y2="1002.5" stroke="#3a3a3a" stroke-width="1.3"/>
<circle cx="1644.2" cy="986" r="11" fill="url(#cbt2)"/>
<circle cx="1696.3" cy="986" r="11" fill="url(#cbt2)"/>
<circle cx="1747.3" cy="986" r="11" fill="url(#cbt2)"/>
<circle cx="1798.1" cy="986" r="11" fill="url(#cbt2)"/>
<rect x="1640.3" y="981.6" width="8.6" height="8.6" fill="#2a2a2a"/>
<path d="M1693.4,980.8 L1702.8,986.3 L1693.4,991.8Z" fill="#2a2a2a"/>
<path d="M1742.5,980.8 H1740.8 V991.8 H1742.5 M1752.2,980.8 H1753.9 V991.8 H1752.2" stroke="#2a2a2a" stroke-width="2" fill="none"/><circle cx="1745.8" cy="986.3" r="1" fill="#2a2a2a"/><circle cx="1749" cy="986.3" r="1" fill="#2a2a2a"/>
<path d="M1798.5,986 C1795.5,982 1791.3,982.5 1791.3,986 C1791.3,989.5 1795.5,990 1798.5,986 C1801.5,982 1805.7,982.5 1805.7,986 C1805.7,989.5 1801.5,990 1798.5,986Z" fill="none" stroke="#2a2a2a" stroke-width="1.8"/>
<rect x="1823" y="969" width="97" height="33.5" fill="url(#db)"/>
<line x1="1874" y1="969" x2="1874" y2="1002.5" stroke="#2a2a2a" stroke-width="1.2"/>
<circle cx="1849.4" cy="986" r="11" fill="#333"/><circle cx="1901.3" cy="986" r="11" fill="#353535"/>
<path d="M1843.5,985 A6,6 0 0 1 1854.5,982.5 M1855.3,987 A6,6 0 0 1 1844.3,989.5" stroke="#1c1c1c" stroke-width="2.4" fill="none"/><path d="M1852,980 L1856.5,984 L1851,984.5Z M1847,992 L1842.5,988 L1848,987.5Z" fill="#1c1c1c"/>
<rect x="1619" y="1004" width="153" height="33" fill="url(#lb)"/><rect x="1773" y="1004" width="147" height="33" fill="url(#lb)"/>
<line x1="1772.5" y1="1004" x2="1772.5" y2="1037" stroke="#777" stroke-width="1"/>
<circle cx="1654" cy="1021" r="11" fill="url(#cbt)"/><circle cx="1894" cy="1021" r="11" fill="url(#cbt)"/>
<text x="1654.0" y="1027.5" font-size="22.00" fill="#2a2a2a" text-anchor="middle" >«</text>
<text x="1894.0" y="1027.5" font-size="22.00" fill="#2a2a2a" text-anchor="middle" >»</text>
<text x="1684.0" y="1029.8" font-size="25.29" fill="#2c2c2c" font-weight="bold" textLength="56.3" lengthAdjust="spacingAndGlyphs" >Back</text>
<text x="1804.8" y="1029.8" font-size="25.29" fill="#2c2c2c" font-weight="bold" textLength="57.8" lengthAdjust="spacingAndGlyphs" >Next</text>
<rect x="1116.5" y="118.5" width="731" height="585.8" fill="none" stroke="#ffff00" stroke-width="8"/>
<text x="1442.0" y="141.8" font-size="16.72" fill="#dcdcdc" textLength="80.7" lengthAdjust="spacingAndGlyphs" >CIE 1931 xy</text>
<rect x="1151" y="147" width="690" height="523" fill="#232323" />
<text x="1143.8" y="675.7" font-size="15.4" fill="#dcdcdc" text-anchor="end">0</text>
<text x="1151.0" y="693" font-size="14.6" fill="#dcdcdc" text-anchor="middle">0</text>
<text x="1143.8" y="613.4" font-size="15.4" fill="#dcdcdc" text-anchor="end">0,1</text>
<text x="1233.1" y="693" font-size="14.6" fill="#dcdcdc" text-anchor="middle">0,1</text>
<text x="1143.8" y="551.2" font-size="15.4" fill="#dcdcdc" text-anchor="end">0,2</text>
<text x="1315.1" y="693" font-size="14.6" fill="#dcdcdc" text-anchor="middle">0,2</text>
<text x="1143.8" y="488.9" font-size="15.4" fill="#dcdcdc" text-anchor="end">0,3</text>
<text x="1397.2" y="693" font-size="14.6" fill="#dcdcdc" text-anchor="middle">0,3</text>
<text x="1143.8" y="426.7" font-size="15.4" fill="#dcdcdc" text-anchor="end">0,4</text>
<text x="1479.2" y="693" font-size="14.6" fill="#dcdcdc" text-anchor="middle">0,4</text>
<text x="1143.8" y="364.4" font-size="15.4" fill="#dcdcdc" text-anchor="end">0,5</text>
<text x="1561.3" y="693" font-size="14.6" fill="#dcdcdc" text-anchor="middle">0,5</text>
<text x="1143.8" y="302.1" font-size="15.4" fill="#dcdcdc" text-anchor="end">0,6</text>
<text x="1643.4" y="693" font-size="14.6" fill="#dcdcdc" text-anchor="middle">0,6</text>
<text x="1143.8" y="239.9" font-size="15.4" fill="#dcdcdc" text-anchor="end">0,7</text>
<text x="1725.4" y="693" font-size="14.6" fill="#dcdcdc" text-anchor="middle">0,7</text>
<text x="1143.8" y="177.6" font-size="15.4" fill="#dcdcdc" text-anchor="end">0,8</text>
<text x="1807.5" y="693" font-size="14.6" fill="#dcdcdc" text-anchor="middle">0,8</text>
<defs><linearGradient id="fbL" x1="0" y1="150" x2="0" y2="667" gradientUnits="userSpaceOnUse"><stop offset="0" stop-color="#009900"/><stop offset="0.45" stop-color="#009630"/><stop offset="0.62" stop-color="#009a9a"/><stop offset="0.8" stop-color="#003c9a"/><stop offset="1" stop-color="#000099"/></linearGradient><linearGradient id="fbU" x1="1397" y1="297" x2="1758" y2="502" gradientUnits="userSpaceOnUse"><stop offset="0" stop-color="#109a00"/><stop offset="0.3" stop-color="#8a8a00"/><stop offset="0.6" stop-color="#9a4000"/><stop offset="1" stop-color="#9a0000"/></linearGradient><linearGradient id="fbD" x1="1274" y1="0" x2="1758" y2="0" gradientUnits="userSpaceOnUse"><stop offset="0" stop-color="#10009a"/><stop offset="0.35" stop-color="#7a009a"/><stop offset="0.65" stop-color="#9a0050"/><stop offset="1" stop-color="#9a0000"/></linearGradient><linearGradient id="fbT" x1="1274" y1="633" x2="1676" y2="297" gradientUnits="userSpaceOnUse"><stop offset="0" stop-color="#2020ff"/><stop offset="0.35" stop-color="#40ffff"/><stop offset="0.5" stop-color="#ffffff"/><stop offset="0.7" stop-color="#ffd040"/><stop offset="1" stop-color="#ff2020"/></linearGradient><radialGradient id="fbW" cx="1408" cy="466" r="110" gradientUnits="userSpaceOnUse"><stop offset="0" stop-color="#fff" stop-opacity="1"/><stop offset="1" stop-color="#fff" stop-opacity="0"/></radialGradient><clipPath id="fbC"><path d="M1291.7,667.2 C1287.1,663.9 1272.4,654.9 1264.0,647.3 C1255.6,639.6 1248.1,631.4 1241.4,621.3 C1234.8,611.2 1230.2,599.6 1224.1,586.6 C1218.0,573.6 1210.5,557.7 1205.0,543.3 C1199.5,528.9 1194.9,513.1 1191.2,500.0 C1187.5,486.9 1186.0,478.6 1182.7,464.7 C1179.4,450.8 1174.7,432.6 1171.2,416.6 C1167.7,400.6 1164.0,382.9 1161.5,368.5 C1159.0,354.1 1157.5,341.4 1156.2,330.0 C1154.9,318.6 1154.2,309.2 1153.8,300.0 C1153.3,290.8 1153.3,283.7 1153.5,274.7 C1153.7,265.7 1154.1,254.9 1154.8,245.9 C1155.5,236.9 1156.2,228.8 1157.7,220.8 C1159.2,212.8 1160.9,205.4 1163.5,197.7 C1166.1,190.0 1168.9,181.0 1173.1,174.6 C1177.3,168.2 1181.8,163.3 1188.5,159.2 C1195.2,155.1 1203.4,151.0 1213.0,150.2 C1222.6,149.4 1234.2,151.0 1246.2,154.4 C1258.2,157.8 1271.9,164.5 1284.7,170.8 C1297.5,177.1 1312.3,186.1 1323.2,192.0 C1334.1,197.9 1340.5,200.6 1350.0,206.0 C1359.5,211.4 1367.3,216.4 1380.0,224.6 C1392.7,232.8 1410.8,244.9 1426.2,255.4 C1441.6,265.9 1457.0,276.9 1472.4,287.7 C1487.8,298.5 1500.7,306.6 1518.6,320.0 C1536.5,333.4 1556.1,349.0 1580.0,367.8 C1603.9,386.6 1632.8,410.2 1661.8,433.0 C1690.8,455.8 1738.4,492.6 1753.7,504.5 L1291.7,667.2Z"/></clipPath></defs>
<path d="M1291.7,667.2 C1287.1,663.9 1272.4,654.9 1264.0,647.3 C1255.6,639.6 1248.1,631.4 1241.4,621.3 C1234.8,611.2 1230.2,599.6 1224.1,586.6 C1218.0,573.6 1210.5,557.7 1205.0,543.3 C1199.5,528.9 1194.9,513.1 1191.2,500.0 C1187.5,486.9 1186.0,478.6 1182.7,464.7 C1179.4,450.8 1174.7,432.6 1171.2,416.6 C1167.7,400.6 1164.0,382.9 1161.5,368.5 C1159.0,354.1 1157.5,341.4 1156.2,330.0 C1154.9,318.6 1154.2,309.2 1153.8,300.0 C1153.3,290.8 1153.3,283.7 1153.5,274.7 C1153.7,265.7 1154.1,254.9 1154.8,245.9 C1155.5,236.9 1156.2,228.8 1157.7,220.8 C1159.2,212.8 1160.9,205.4 1163.5,197.7 C1166.1,190.0 1168.9,181.0 1173.1,174.6 C1177.3,168.2 1181.8,163.3 1188.5,159.2 C1195.2,155.1 1203.4,151.0 1213.0,150.2 C1222.6,149.4 1234.2,151.0 1246.2,154.4 C1258.2,157.8 1271.9,164.5 1284.7,170.8 C1297.5,177.1 1312.3,186.1 1323.2,192.0 C1334.1,197.9 1340.5,200.6 1350.0,206.0 C1359.5,211.4 1367.3,216.4 1380.0,224.6 C1392.7,232.8 1410.8,244.9 1426.2,255.4 C1441.6,265.9 1457.0,276.9 1472.4,287.7 C1487.8,298.5 1500.7,306.6 1518.6,320.0 C1536.5,333.4 1556.1,349.0 1580.0,367.8 C1603.9,386.6 1632.8,410.2 1661.8,433.0 C1690.8,455.8 1738.4,492.6 1753.7,504.5 L1291.7,667.2Z" fill="url(#fbL)"/>
<g clip-path="url(#fbC)"><path d="M1397.2,296.8 L1200,100 L1900,100 L1900,520 L1753.7,504.5 L1676.2,464.9Z" fill="url(#fbU)"/><path d="M1274.1,633.0 L1291.7,667.2 L1753.7,504.5 L1676.2,464.9Z" fill="url(#fbD)"/></g>
<defs><linearGradient id="fR" x1="1676.2" y1="464.9" x2="1375.9" y2="355.0" gradientUnits="userSpaceOnUse"><stop offset="0" stop-color="#ff0000"/><stop offset="0.55" stop-color="#ff0000"/><stop offset="1" stop-color="#000"/></linearGradient><linearGradient id="fG" x1="1397.2" y1="296.8" x2="1498.5" y2="539.2" gradientUnits="userSpaceOnUse"><stop offset="0" stop-color="#00ff00"/><stop offset="0.55" stop-color="#00ff00"/><stop offset="1" stop-color="#000"/></linearGradient><linearGradient id="fB" x1="1274.1" y1="633.0" x2="1455.5" y2="332.0" gradientUnits="userSpaceOnUse"><stop offset="0" stop-color="#0000ff"/><stop offset="0.55" stop-color="#0000ff"/><stop offset="1" stop-color="#000"/></linearGradient></defs>
<g style="isolation:isolate"><path d="M1397.2,296.8 L1676.2,464.9 L1274.1,633.0Z" fill="#000"/><path d="M1397.2,296.8 L1676.2,464.9 L1274.1,633.0Z" fill="url(#fR)" style="mix-blend-mode:plus-lighter"/><path d="M1397.2,296.8 L1676.2,464.9 L1274.1,633.0Z" fill="url(#fG)" style="mix-blend-mode:plus-lighter"/><path d="M1397.2,296.8 L1676.2,464.9 L1274.1,633.0Z" fill="url(#fB)" style="mix-blend-mode:plus-lighter"/></g>
<rect x="0" y="26" width="1.5" height="1013" fill="url(#dots)"/>
</svg>
<canvas id="cie" width="690" height="523"></canvas>
<svg width="1920" height="1039" viewBox="0 0 1920 1039" style="pointer-events:none">
<path d="M1151,672 V147 H1841 V670.4 H1145" fill="none" stroke="#9c9c9c" stroke-width="1.8"/>
<line x1="1145" y1="670.4" x2="1151" y2="670.4" stroke="#c0c0c0" stroke-width="1.4"/>
<line x1="1151.0" y1="670.4" x2="1151.0" y2="677" stroke="#c0c0c0" stroke-width="1.6"/>
<line x1="1145" y1="608.1" x2="1151" y2="608.1" stroke="#c0c0c0" stroke-width="1.4"/>
<line x1="1233.1" y1="670.4" x2="1233.1" y2="677" stroke="#c0c0c0" stroke-width="1.6"/>
<line x1="1145" y1="545.9" x2="1151" y2="545.9" stroke="#c0c0c0" stroke-width="1.4"/>
<line x1="1315.1" y1="670.4" x2="1315.1" y2="677" stroke="#c0c0c0" stroke-width="1.6"/>
<line x1="1145" y1="483.6" x2="1151" y2="483.6" stroke="#c0c0c0" stroke-width="1.4"/>
<line x1="1397.2" y1="670.4" x2="1397.2" y2="677" stroke="#c0c0c0" stroke-width="1.6"/>
<line x1="1145" y1="421.4" x2="1151" y2="421.4" stroke="#c0c0c0" stroke-width="1.4"/>
<line x1="1479.2" y1="670.4" x2="1479.2" y2="677" stroke="#c0c0c0" stroke-width="1.6"/>
<line x1="1145" y1="359.1" x2="1151" y2="359.1" stroke="#c0c0c0" stroke-width="1.4"/>
<line x1="1561.3" y1="670.4" x2="1561.3" y2="677" stroke="#c0c0c0" stroke-width="1.6"/>
<line x1="1145" y1="296.8" x2="1151" y2="296.8" stroke="#c0c0c0" stroke-width="1.4"/>
<line x1="1643.4" y1="670.4" x2="1643.4" y2="677" stroke="#c0c0c0" stroke-width="1.6"/>
<line x1="1145" y1="234.6" x2="1151" y2="234.6" stroke="#c0c0c0" stroke-width="1.4"/>
<line x1="1725.4" y1="670.4" x2="1725.4" y2="677" stroke="#c0c0c0" stroke-width="1.6"/>
<line x1="1145" y1="172.3" x2="1151" y2="172.3" stroke="#c0c0c0" stroke-width="1.4"/>
<line x1="1807.5" y1="670.4" x2="1807.5" y2="677" stroke="#c0c0c0" stroke-width="1.6"/>
<rect x="1601" y="153.5" width="232.5" height="196.5" fill="url(#inUp)"/>
<path d="M1601,174.5 L1833.5,328.5 V350 H1601Z" fill="url(#inLo)"/>
<rect x="1601" y="153.5" width="232.5" height="196.5" fill="none" stroke="#8a8a8a" stroke-width="2"/>
<rect x="1709" y="243.8" width="14.6" height="15" fill="none" stroke="#fff" stroke-width="1.8"/>
<circle cx="1727.8" cy="280.6" r="4.3" fill="none" stroke="#222" stroke-width="1.4"/>
<rect x="1569" y="636" width="268" height="28" fill="#333333"/>
<rect x="1389.0" y="288.1" width="13.8" height="14" fill="none" stroke="#fff" stroke-width="2"/>
<rect x="1393.9" y="356.0" width="13.8" height="14" fill="none" stroke="#fff" stroke-width="2"/>
<rect x="1451.7" y="354.5" width="13.8" height="14" fill="none" stroke="#fff" stroke-width="2"/>
<rect x="1488.0" y="346.8" width="13.8" height="14" fill="none" stroke="#fff" stroke-width="2"/>
<rect x="1510.7" y="365.5" width="13.8" height="14" fill="none" stroke="#fff" stroke-width="2"/>
<rect x="1532.1" y="387.7" width="13.8" height="14" fill="none" stroke="#fff" stroke-width="2"/>
<rect x="1564.4" y="410.5" width="13.8" height="14" fill="none" stroke="#fff" stroke-width="2"/>
<rect x="1422.7" y="397.6" width="13.8" height="14" fill="none" stroke="#fff" stroke-width="2"/>
<rect x="1472.6" y="436.7" width="13.8" height="14" fill="none" stroke="#fff" stroke-width="2"/>
<rect x="1455.5" y="441.7" width="13.8" height="14" fill="none" stroke="#fff" stroke-width="2"/>
<rect x="1668.5" y="455.6" width="13.8" height="14" fill="none" stroke="#fff" stroke-width="2"/>
<rect x="1585.3" y="463.5" width="13.8" height="14" fill="none" stroke="#fff" stroke-width="2"/>
<rect x="1522.5" y="466.9" width="13.8" height="14" fill="none" stroke="#fff" stroke-width="2"/>
<rect x="1359.6" y="438.4" width="13.8" height="14" fill="none" stroke="#fff" stroke-width="2"/>
<rect x="1328.4" y="458.9" width="13.8" height="14" fill="none" stroke="#fff" stroke-width="2"/>
<rect x="1314.1" y="493.2" width="13.8" height="14" fill="none" stroke="#fff" stroke-width="2"/>
<rect x="1348.9" y="498.1" width="13.8" height="14" fill="none" stroke="#fff" stroke-width="2"/>
<rect x="1364.1" y="506.3" width="13.8" height="14" fill="none" stroke="#fff" stroke-width="2"/>
<rect x="1381.8" y="523.4" width="13.8" height="14" fill="none" stroke="#fff" stroke-width="2"/>
<rect x="1449.9" y="507.9" width="13.8" height="14" fill="none" stroke="#fff" stroke-width="2"/>
<rect x="1321.2" y="542.6" width="13.8" height="14" fill="none" stroke="#fff" stroke-width="2"/>
<rect x="1300.9" y="573.7" width="13.8" height="14" fill="none" stroke="#fff" stroke-width="2"/>
<rect x="1406.7" y="565.8" width="13.8" height="14" fill="none" stroke="#fff" stroke-width="2"/>
<rect x="1267.2" y="626.1" width="13.8" height="14" fill="none" stroke="#fff" stroke-width="2"/>
<circle cx="1395.9" cy="297.5" r="4.2" fill="#00ff00" stroke="#140c0c" stroke-width="1.6"/>
<circle cx="1399.1" cy="368.9" r="4.2" fill="#5e8a5e" stroke="#140c0c" stroke-width="1.6"/>
<circle cx="1459.8" cy="365.4" r="4.2" fill="#9aaa6a" stroke="#140c0c" stroke-width="1.6"/>
<circle cx="1495.7" cy="358.5" r="4.2" fill="#ffff00" stroke="#140c0c" stroke-width="1.6"/>
<circle cx="1517.6" cy="377.0" r="4.2" fill="#e0c040" stroke="#140c0c" stroke-width="1.6"/>
<circle cx="1537.8" cy="399.3" r="4.2" fill="#dca050" stroke="#140c0c" stroke-width="1.6"/>
<circle cx="1570.8" cy="421.7" r="4.2" fill="#d88a4a" stroke="#140c0c" stroke-width="1.6"/>
<circle cx="1428.0" cy="412.0" r="4.2" fill="#586650" stroke="#140c0c" stroke-width="1.6"/>
<circle cx="1478.0" cy="451.6" r="4.2" fill="#6c4c44" stroke="#140c0c" stroke-width="1.6"/>
<circle cx="1459.5" cy="456.9" r="4.2" fill="#bc9888" stroke="#140c0c" stroke-width="1.6"/>
<circle cx="1671.3" cy="466.8" r="4.2" fill="#ff0000" stroke="#140c0c" stroke-width="1.6"/>
<circle cx="1591.7" cy="477.0" r="4.2" fill="#b84050" stroke="#140c0c" stroke-width="1.6"/>
<circle cx="1527.7" cy="480.9" r="4.2" fill="#c06070" stroke="#140c0c" stroke-width="1.6"/>
<circle cx="1363.1" cy="457.3" r="4.2" fill="#80aca0" stroke="#140c0c" stroke-width="1.6"/>
<circle cx="1332.1" cy="475.8" r="4.2" fill="#00ffff" stroke="#140c0c" stroke-width="1.6"/>
<circle cx="1319.4" cy="513.2" r="4.2" fill="#208898" stroke="#140c0c" stroke-width="1.6"/>
<circle cx="1351.8" cy="517.6" r="4.2" fill="#7a8894" stroke="#140c0c" stroke-width="1.6"/>
<circle cx="1368.0" cy="524.5" r="4.2" fill="#8a8a9a" stroke="#140c0c" stroke-width="1.6"/>
<circle cx="1384.3" cy="540.4" r="4.2" fill="#5a4660" stroke="#140c0c" stroke-width="1.6"/>
<circle cx="1452.3" cy="524.3" r="4.2" fill="#b86a88" stroke="#140c0c" stroke-width="1.6"/>
<circle cx="1325.0" cy="561.1" r="4.2" fill="#505c90" stroke="#140c0c" stroke-width="1.6"/>
<circle cx="1305.8" cy="590.7" r="4.2" fill="#404890" stroke="#140c0c" stroke-width="1.6"/>
<circle cx="1410.3" cy="578.6" r="4.2" fill="#ff00ff" stroke="#140c0c" stroke-width="1.6"/>
<circle cx="1277.1" cy="635.7" r="4.2" fill="#0000ff" stroke="#140c0c" stroke-width="1.6"/>
<rect x="1400.3" y="458.1" width="13.8" height="14" fill="#f8f8f8" stroke="#111" stroke-width="2"/>
<circle cx="1404.9" cy="473.8" r="4.2" fill="#a0a0a0" stroke="#140c0c" stroke-width="1.6"/>
<circle cx="1376.3" cy="509.8" r="4.4" fill="#000" stroke="#140c0c" stroke-width="1.4"/>
<text x="1570" y="658.3" font-size="21.8" fill="#f4f4f4" textLength="225" lengthAdjust="spacingAndGlyphs">RGB Triplet: 255, 255, 0</text>
</svg>
<script>
(function(){
var cv=document.getElementById('cie'); if(!cv) return;
var W=690,H=523,OX=1151,OY=147;
var ctx=cv.getContext('2d');
var off=document.createElement('canvas'); off.width=W; off.height=H;
var oc=off.getContext('2d'); var img=oc.createImageData(W,H); var d=img.data;
var GP=1.0; function g(c){ c=Math.max(0,Math.min(1,c)); return Math.pow(c,GP); }
var DARK=0.6;
for(var j=0;j<H;j++){ var yv=(670.4-(OY+j+0.5))/622.6; if(yv<=0.001) yv=0.001;
 for(var i=0;i<W;i++){ var xv=((OX+i+0.5)-1151)/820.6;
  var X=xv/yv, Y=1, Z=(1-xv-yv)/yv;
  var r=3.2406*X-1.5372*Y-0.4986*Z, gg=-0.9689*X+1.8758*Y+0.0415*Z, b=0.0557*X-0.2040*Y+1.0570*Z;
  var out=(r<0||gg<0||b<0);
  if(r<0)r=0; if(gg<0)gg=0; if(b<0)b=0;
  var m=Math.max(r,gg,b); if(m<=0)m=1; r/=m; gg/=m; b/=m;
  var k=out?DARK:1; var p=(j*W+i)*4;
  d[p]=g(r)*255*k; d[p+1]=g(gg)*255*k; d[p+2]=g(b)*255*k; d[p+3]=255;
 }}
oc.putImageData(img,0,0);
var P=[[1291.7,667.2],[1264,647.3],[1241.4,621.3],[1224.1,586.6],[1205,543.3],[1191.2,500],[1182.7,464.7],[1171.2,416.6],[1161.5,368.5],[1156.2,330],[1153.8,300],[1153.5,274.7],[1154.8,245.9],[1157.7,220.8],[1163.5,197.7],[1173.1,174.6],[1188.5,159.2],[1213,150.2],[1246.2,154.4],[1284.7,170.8],[1323.2,192],[1350,206],[1380,224.6],[1426.2,255.4],[1472.4,287.7],[1518.6,320],[1580,367.8],[1661.8,433],[1753.7,504.5]];
function cr(pts){ var n=pts.length; ctx.beginPath(); ctx.moveTo(pts[0][0]-OX,pts[0][1]-OY);
 for(var i=0;i<n-1;i++){ var p0=pts[Math.max(i-1,0)],p1=pts[i],p2=pts[i+1],p3=pts[Math.min(i+2,n-1)];
  var c1x=p1[0]+(p2[0]-p0[0])/6, c1y=p1[1]+(p2[1]-p0[1])/6, c2x=p2[0]-(p3[0]-p1[0])/6, c2y=p2[1]-(p3[1]-p1[1])/6;
  ctx.bezierCurveTo(c1x-OX,c1y-OY,c2x-OX,c2y-OY,p2[0]-OX,p2[1]-OY);} }
cr(P); ctx.lineTo(1291.7-OX,667.2-OY);
ctx.closePath(); ctx.save(); ctx.clip(); ctx.drawImage(off,0,0); ctx.restore();
})();
</script>
</body></html>
